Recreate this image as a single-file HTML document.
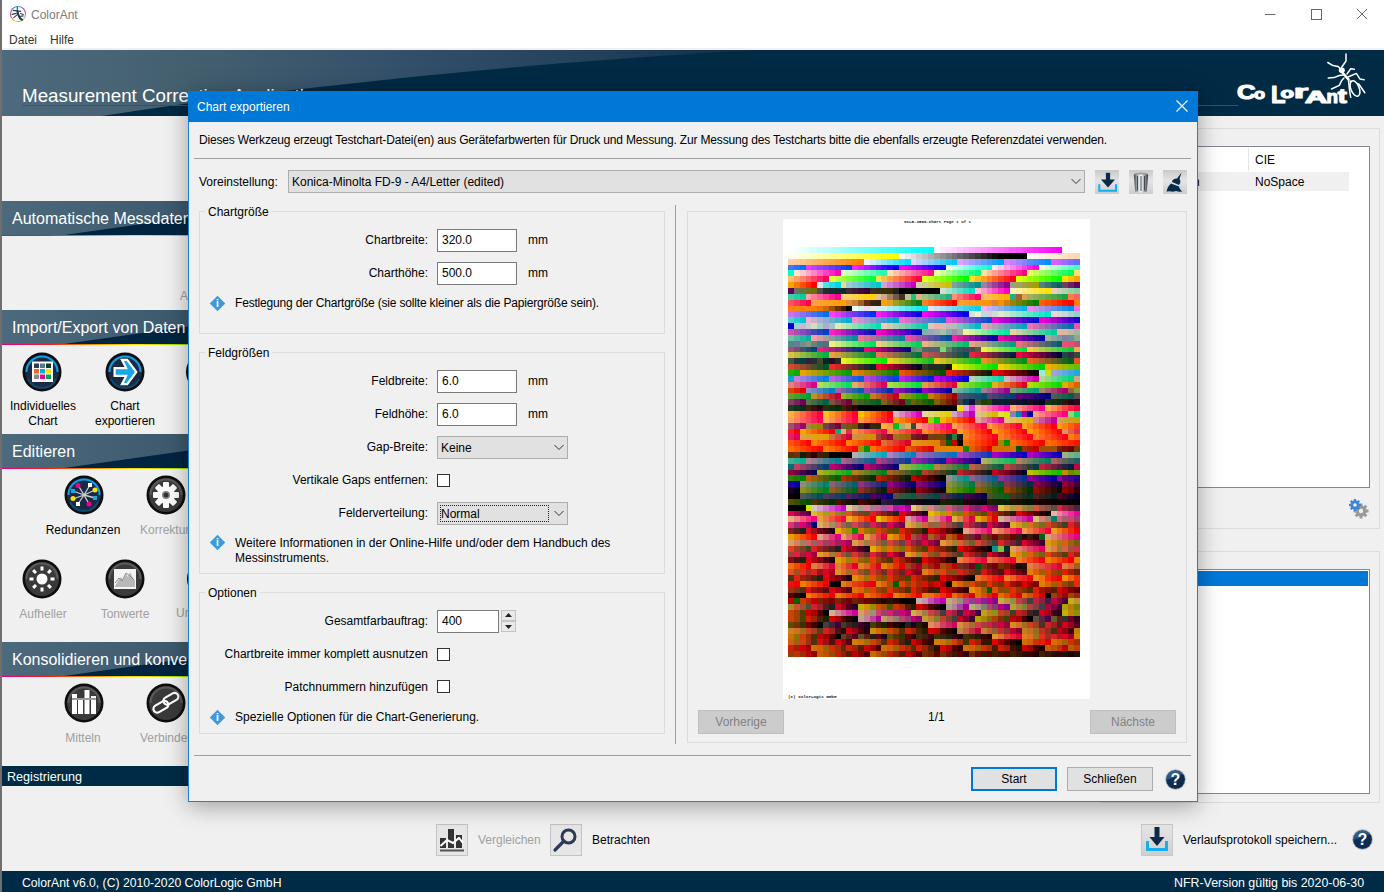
<!DOCTYPE html>
<html><head><meta charset="utf-8">
<style>
*{margin:0;padding:0;box-sizing:border-box}
html,body{width:1384px;height:892px;overflow:hidden;background:#f0f0f0;font-family:"Liberation Sans",sans-serif;font-size:12px;color:#000;position:relative}
.a{position:absolute}
.t{position:absolute;white-space:nowrap;line-height:14px}
.hdr{background:linear-gradient(90deg,#4c687b 0%,#3a566b 60%,#2b475d 100%)}
.sec{position:absolute;left:2px;width:190px;height:35px;overflow:hidden}
.sec .bg{position:absolute;left:0;top:0;width:190px;height:34px;background:linear-gradient(90deg,#4d6a7d,#3c586c)}
.sec .tri{position:absolute;left:0;top:0;width:190px;height:34px;background:#012540;clip-path:polygon(62px 34px,190px 16px,190px 34px)}
.sec .rb{position:absolute;left:0;top:34px;width:190px;height:1px;background:linear-gradient(90deg,#e0007a,#f02020 25%,#ff8000 45%,#ffe000 70%,#80e000 100%)}
.sec .tx{position:absolute;left:10px;top:8px;color:#fff;font-size:16px;line-height:20px;white-space:nowrap}
.ico{position:absolute;width:40px;height:40px;border-radius:50%}
.lbl{position:absolute;white-space:nowrap;text-align:center;line-height:15px;font-size:12px;margin-top:1px}
.gb{position:absolute;border:1px solid #dcdcdc}
.gbt{position:absolute;background:#f0f0f0;padding:0 3px;line-height:14px}
.inp{position:absolute;background:#fff;border:1px solid #7a7a7a;height:23px;width:80px;padding-left:4px;line-height:21px}
.cmb{position:absolute;background:#e1e1e1;border:1px solid #adadad;height:23px;line-height:23px;padding-left:3px}
.chk{position:absolute;width:13px;height:13px;border:1px solid #333;background:#fff}
.rl{position:absolute;white-space:nowrap;text-align:right;line-height:14px}
.btn{position:absolute;background:#e1e1e1;border:1px solid #adadad;text-align:center;line-height:22px;height:24px;width:86px}
.dis{background:#cccccc;border-color:#bfbfbf;color:#838383}
.info{position:absolute;width:15px;height:15px}
.info:before{content:"";position:absolute;left:2px;top:2px;width:11px;height:11px;background:#3d9bd8;transform:rotate(45deg)}
.info:after{content:"i";position:absolute;left:0;top:1px;width:15px;text-align:center;color:#fff;font-weight:bold;font-size:10px;line-height:13px}
.help{position:absolute;width:19px;height:19px;border-radius:50%;background:linear-gradient(160deg,#3a6890 0%,#28507a 38%,#0d2d55 42%,#0b2a50 100%);box-shadow:0 0 1px 0.5px rgba(40,30,20,0.5)}
.help:after{content:"?";position:absolute;left:0;top:0;width:19px;text-align:center;color:#fff;font-weight:bold;font-size:16px;line-height:19px}
</style></head><body>

<!-- left window border -->
<div class="a" style="left:0;top:0;width:2px;height:892px;background:#6f6f6f"></div>
<!-- title bar -->
<div class="a" style="left:2px;top:0;width:1382px;height:48px;background:#fff"></div>
<div class="a" style="left:2px;top:48px;width:1382px;height:2px;background:#f0f0f0"></div>
<div class="t" style="left:31px;top:8px;font-size:12px;color:#7b7b7b">ColorAnt</div>
<div class="a" style="left:10px;top:6px;width:16px;height:16px;border-radius:50%;background:conic-gradient(#40a8e0 0deg,#9048c8 45deg,#e02888 75deg,#f07040 105deg,#b0e040 140deg,#60d040 170deg,#f0e040 200deg,#ff8030 225deg,#e02050 245deg,#e03090 270deg,#8050c0 300deg,#3070d0 330deg,#40a8e0 360deg)"></div>
<div class="a" style="left:11.3px;top:7.3px;width:13.4px;height:13.4px;border-radius:50%;background:#fff"></div>
<svg class="a" style="left:10px;top:6px" width="16" height="16" viewBox="0 0 16 16"><g stroke="#2a3f58" stroke-width="1.1" fill="none" stroke-linecap="round"><path d="M7.3 1V4.5"/><path d="M3.1 4.4L10.7 5.4"/><path d="M2.1 8.4L6.3 7.4"/><path d="M3.8 11.6L7 8.9"/><path d="M10.7 7.4L13.2 8.6"/><path d="M9.5 10.5L13.2 9.9"/></g><path d="M7.5 5.5L8.2 8.5L10 12.3L12 13.8" stroke="#1d3550" stroke-width="2" fill="none" stroke-linecap="round"/></svg>
<svg class="a" style="left:1265px;top:9px" width="12" height="12" viewBox="0 0 12 12"><path d="M0 5.5H10.5" stroke="#666" stroke-width="1"/></svg>
<svg class="a" style="left:1311px;top:9px" width="12" height="12" viewBox="0 0 12 12"><rect x="0.5" y="0.5" width="10" height="10" stroke="#666" stroke-width="1" fill="none"/></svg>
<svg class="a" style="left:1356px;top:8px" width="12" height="12" viewBox="0 0 12 12"><path d="M1 1L11 11M11 1L1 11" stroke="#666" stroke-width="1"/></svg>
<div class="t" style="left:9px;top:33px;color:#333">Datei</div>
<div class="t" style="left:50px;top:33px;color:#333">Hilfe</div>

<!-- header -->
<div class="a" style="left:2px;top:50px;width:1382px;height:66px;overflow:hidden;background:#012a45">
  <div class="a" style="left:0;top:0;width:1382px;height:66px;background:linear-gradient(90deg,#4d6a7e 0,#44606f 180px,#33506a 400px,#22405a 600px,#0f2d46 760px);clip-path:path('M0 0 L755 0 C600 8 330 30 100 66 L0 66 Z')"></div>
</div>
<div class="t" style="left:22px;top:85px;font-size:18.8px;line-height:22px;color:#fff">Measurement Correction Application</div>
<div class="a" style="left:22px;top:105px;width:1216px;height:1px;background:linear-gradient(90deg,#a02080,#f00020 130px,#ff0010 600px,#d0007a 1216px)"></div>


<!-- LEFT SIDEBAR -->
<div class="sec" style="top:201px"><div class="bg"></div><div class="tri"></div><div class="rb"></div><div class="tx">Automatische Messdaten</div></div>
<div class="t" style="left:180px;top:289px;color:#a0a0a0">A</div>
<div class="sec" style="top:310px"><div class="bg"></div><div class="tri"></div><div class="rb"></div><div class="tx">Import/Export von Daten</div></div>
<div class="sec" style="top:434px"><div class="bg"></div><div class="tri"></div><div class="rb"></div><div class="tx">Editieren</div></div>
<div class="sec" style="top:642px"><div class="bg"></div><div class="tri"></div><div class="rb"></div><div class="tx">Konsolidieren und konvertieren</div></div>
<div class="a" style="left:2px;top:766px;width:190px;height:20px;background:#002b46"></div>
<div class="t" style="left:7px;top:770px;color:#fff;font-size:12.6px">Registrierung</div>

<!-- icons row 1 -->
<svg class="a" style="left:22px;top:352px" width="40" height="40" viewBox="0 0 40 40">
 <circle cx="20" cy="20" r="19.5" fill="#0d0d10"/><circle cx="20" cy="20" r="17" fill="#1b2a44"/>
 <path d="M4.5 20A15.5 15.5 0 0 1 35.5 20" stroke="#0aa0e6" stroke-width="2" fill="none"/>
 <path d="M6 27A15.5 15.5 0 0 0 34 27" stroke="#0b4c6e" stroke-width="2" fill="none"/>
 <rect x="10" y="9.5" width="21" height="20.5" fill="#fff"/>
 <rect x="12" y="11.5" width="5" height="4.5" fill="#333a5a"/><rect x="18" y="11.5" width="5" height="4.5" fill="#4f7f86"/><rect x="24" y="11.5" width="5" height="4.5" fill="#123a2a"/>
 <rect x="12" y="17" width="5" height="4.5" fill="#f26522"/><rect x="18" y="17" width="5" height="4.5" fill="#00aee0"/><rect x="24" y="17" width="5" height="4.5" fill="#ffe000"/>
 <rect x="12" y="22.5" width="5" height="4.5" fill="#888"/><rect x="18" y="22.5" width="5" height="4.5" fill="#ec008c"/><rect x="24" y="22.5" width="5" height="4.5" fill="#00a651"/>
</svg>
<div class="lbl" style="left:2px;top:398px;width:82px">Individuelles<br>Chart</div>
<svg class="a" style="left:105px;top:352px" width="40" height="40" viewBox="0 0 40 40">
 <circle cx="20" cy="20" r="19.5" fill="#0d0d10"/><circle cx="20" cy="20" r="17" fill="#1b2a44"/>
 <path d="M4.5 20A15.5 15.5 0 0 1 35.5 20" stroke="#0aa0e6" stroke-width="2" fill="none"/>
 <path d="M6 27A15.5 15.5 0 0 0 34 27" stroke="#0b4c6e" stroke-width="2" fill="none"/>
 <g transform="translate(0.6 0)"><path d="M7.9 15.05H18.9L14.5 6.8H22.2L32.1 20L22.2 33.2H14.5L18.9 24.95H7.9Z" fill="#fff"/>
 <path d="M10.1 17.25H22.2L18.35 9H21.1L29.35 20L21.1 31H18.35L22.2 22.75H10.1Z" fill="#1aa6e8"/></g>
</svg>
<div class="lbl" style="left:84px;top:398px;width:82px">Chart<br>exportieren</div>
<div class="a" style="left:186px;top:352px;width:40px;height:40px;border-radius:50%;background:#1b2a44;border:2px solid #0d0d10"></div>

<!-- icons row 2 -->
<svg class="a" style="left:64px;top:475px" width="40" height="40" viewBox="0 0 40 40">
 <circle cx="20" cy="20" r="19.5" fill="#0d0d10"/><circle cx="20" cy="20" r="17" fill="#1b2a44"/>
 <path d="M4.5 20A15.5 15.5 0 0 1 35.5 20" stroke="#0aa0e6" stroke-width="2" fill="none"/>
 <path d="M6 27A15.5 15.5 0 0 0 34 27" stroke="#0b4c6e" stroke-width="2" fill="none"/>
 <g stroke="#ccc" stroke-width="1.3"><path d="M20 20L14 10M20 20L26 10M20 20L31 15M20 20L31 23M20 20L25 29M20 20L14 29M20 20L9 24M20 20L9 16"/></g>
 <circle cx="14" cy="10.5" r="2.5" fill="#ec008c"/><rect x="24" y="8" width="4" height="4" fill="#fff"/><circle cx="31" cy="15" r="2.5" fill="#ffe000"/><rect x="29" y="21" width="4" height="4" fill="#1aa6e8"/>
 <circle cx="25" cy="29" r="2.5" fill="#ec008c"/><rect x="12" y="27" width="4" height="4" fill="#fff"/><circle cx="9" cy="23.5" r="2.5" fill="#ffe000"/><rect x="7" y="14" width="4" height="4" fill="#1aa6e8"/>
</svg>
<div class="lbl" style="left:33px;top:522px;width:100px">Redundanzen</div>
<svg class="a" style="left:146px;top:475px" width="40" height="40" viewBox="0 0 40 40">
 <circle cx="20" cy="20" r="19.5" fill="#0d0d0d"/><circle cx="20" cy="20" r="17" fill="#3a3a3a"/>
 <path d="M4.5 20A15.5 15.5 0 0 1 35.5 20" stroke="#5a5a5a" stroke-width="2" fill="none"/>
 <g fill="#fafafa"><circle cx="20" cy="20" r="9"/><rect x="17" y="7" width="6" height="26" rx="1"/><rect x="7" y="17" width="26" height="6" rx="1"/><rect x="17" y="7" width="6" height="26" rx="1" transform="rotate(45 20 20)"/><rect x="17" y="7" width="6" height="26" rx="1" transform="rotate(-45 20 20)"/></g>
 <circle cx="20" cy="20" r="4" fill="#888"/><circle cx="20" cy="20" r="2.5" fill="#333"/>
</svg>
<div class="lbl" style="left:140px;top:522px;color:#a0a0a0">Korrektur</div>

<!-- icons row 3 -->
<svg class="a" style="left:22px;top:559px" width="40" height="40" viewBox="0 0 40 40">
 <circle cx="20" cy="20" r="19.5" fill="#0d0d0d"/><circle cx="20" cy="20" r="17" fill="#3a3a3a"/>
 <path d="M4.5 20A15.5 15.5 0 0 1 35.5 20" stroke="#5a5a5a" stroke-width="2" fill="none"/>
 <circle cx="20" cy="20" r="5.5" fill="#fff"/>
 <g fill="#fff"><rect x="18.5" y="7.5" width="3" height="4"/><rect x="18.5" y="28.5" width="3" height="4"/><rect x="7.5" y="18.5" width="4" height="3"/><rect x="28.5" y="18.5" width="4" height="3"/>
 <rect x="18.5" y="7.5" width="3" height="4" transform="rotate(45 20 20)"/><rect x="18.5" y="28.5" width="3" height="4" transform="rotate(45 20 20)"/><rect x="7.5" y="18.5" width="4" height="3" transform="rotate(45 20 20)"/><rect x="28.5" y="18.5" width="4" height="3" transform="rotate(45 20 20)"/></g>
</svg>
<div class="lbl" style="left:2px;top:606px;width:82px;color:#a0a0a0">Aufheller</div>
<svg class="a" style="left:105px;top:559px" width="40" height="40" viewBox="0 0 40 40">
 <circle cx="20" cy="20" r="19.5" fill="#0d0d0d"/><circle cx="20" cy="20" r="17" fill="#3a3a3a"/>
 <path d="M4.5 20A15.5 15.5 0 0 1 35.5 20" stroke="#5a5a5a" stroke-width="2" fill="none"/>
 <rect x="9" y="10" width="22" height="20" fill="#f4f4f4"/>
 <path d="M10 27L13 22L16 18L18 21L21 15L23 18L25 13L27 17L30 22L30 28L10 28Z" fill="#b8b8b8"/>
 <path d="M10 24L14 19L17 22L21 14L25 17L29 21" stroke="#888" fill="none" stroke-width="1"/>
</svg>
<div class="lbl" style="left:84px;top:606px;width:82px;color:#a0a0a0">Tonwerte</div>
<div class="a" style="left:186.5px;top:559px;width:40px;height:40px;border-radius:50%;background:#3a3a3a;border:2px solid #0d0d0d"></div>
<div class="t" style="left:176px;top:606px;color:#a0a0a0">Ur</div>

<!-- icons row 4 -->
<svg class="a" style="left:64px;top:683px" width="40" height="40" viewBox="0 0 40 40">
 <circle cx="20" cy="20" r="19.5" fill="#0d0d0d"/><circle cx="20" cy="20" r="17" fill="#3a3a3a"/>
 <path d="M4.5 20A15.5 15.5 0 0 1 35.5 20" stroke="#5a5a5a" stroke-width="2" fill="none"/>
 <g fill="#fff"><rect x="8" y="11" width="5" height="20"/><rect x="14" y="15" width="5" height="16"/><rect x="20.5" y="7" width="5" height="24"/><rect x="27" y="13" width="5" height="18"/></g>
 <rect x="8" y="15" width="24" height="2" fill="#999"/>
</svg>
<div class="lbl" style="left:33px;top:730px;width:100px;color:#a0a0a0">Mitteln</div>
<svg class="a" style="left:146px;top:683px" width="40" height="40" viewBox="0 0 40 40">
 <circle cx="20" cy="20" r="19.5" fill="#0d0d0d"/><circle cx="20" cy="20" r="17" fill="#3a3a3a"/>
 <path d="M4.5 20A15.5 15.5 0 0 1 35.5 20" stroke="#5a5a5a" stroke-width="2" fill="none"/>
 <g stroke="#fff" stroke-width="2.2" fill="none"><rect x="7" y="20" width="16" height="7.5" rx="3.75" transform="rotate(-30 15 24)"/><rect x="17" y="12" width="16" height="7.5" rx="3.75" transform="rotate(-30 25 16)"/></g>
</svg>
<div class="lbl" style="left:140px;top:730px;color:#a0a0a0">Verbinden</div>

<!-- RIGHT PANEL -->
<div class="gb" style="left:1100px;top:128px;width:280px;height:401px"></div>
<div class="a" style="left:1100px;top:146px;width:270px;height:342px;background:#fff;border:1px solid #828790"></div>
<div class="a" style="left:1101px;top:147px;width:248px;height:25px;background:#fff"></div>
<div class="a" style="left:1248px;top:148px;width:1px;height:23px;background:#e5e5e5"></div>
<div class="a" style="left:1101px;top:172px;width:248px;height:19px;background:#f0f0f0"></div>
<div class="t" style="left:1255px;top:153px">CIE</div>
<div class="t" style="left:1255px;top:175px">NoSpace</div>
<div class="t" style="left:1193px;top:175px">n</div>
<svg class="a" style="left:1346px;top:497px" width="24" height="22" viewBox="0 0 24 22">
 <g fill="#9a9a9a"><circle cx="15" cy="14" r="5.5"/><rect x="13.5" y="6.5" width="3" height="15"/><rect x="7.5" y="12.5" width="15" height="3"/><rect x="13.5" y="6.5" width="3" height="15" transform="rotate(45 15 14)"/><rect x="13.5" y="6.5" width="3" height="15" transform="rotate(-45 15 14)"/></g>
 <circle cx="15" cy="14" r="2.2" fill="#eee"/>
 <g fill="#3b86d8"><circle cx="9" cy="8" r="4.5"/><rect x="7.8" y="2" width="2.4" height="12"/><rect x="3" y="6.8" width="12" height="2.4"/><rect x="7.8" y="2" width="2.4" height="12" transform="rotate(45 9 8)"/><rect x="7.8" y="2" width="2.4" height="12" transform="rotate(-45 9 8)"/></g>
 <circle cx="9" cy="8" r="1.8" fill="#eaf2fb"/>
</svg>
<div class="gb" style="left:1100px;top:551px;width:280px;height:252px"></div>
<div class="a" style="left:1100px;top:569px;width:270px;height:225px;background:#fff;border:1px solid #828790"></div>
<div class="a" style="left:1101px;top:571px;width:267px;height:15px;background:#0078d7"></div>

<!-- BOTTOM TOOLBAR -->
<div class="a" style="left:436px;top:824px;width:32px;height:32px;background:#e6e6e6;border:1px solid #c4c4c4"></div>
<svg class="a" style="left:437px;top:825px" width="30" height="30" viewBox="0 0 30 30">
 <g fill="#333"><rect x="3" y="13" width="6" height="10"/><rect x="11" y="4" width="6" height="19"/><rect x="19" y="10" width="6" height="13"/></g>
 <path d="M3.5 21L10 15L16 18L22 13L26 18" stroke="#fff" stroke-width="2" fill="none"/>
 <rect x="3" y="24.5" width="24" height="2" fill="#555"/>
</svg>
<div class="t" style="left:478px;top:833px;color:#a0a0a0">Vergleichen</div>
<div class="a" style="left:550px;top:824px;width:32px;height:32px;background:#e6e6e6;border:1px solid #c4c4c4"></div>
<svg class="a" style="left:551px;top:825px" width="30" height="30" viewBox="0 0 30 30">
 <circle cx="17.5" cy="11.5" r="6.5" stroke="#2c3a55" stroke-width="3" fill="none"/>
 <path d="M13 16L4 25" stroke="#2c3a55" stroke-width="3.2" stroke-linecap="round"/>
</svg>
<div class="t" style="left:592px;top:833px">Betrachten</div>
<div class="a" style="left:1141px;top:824px;width:32px;height:32px;background:linear-gradient(#e6e6e6,#cfcfcf);border:1px solid #c8c8c8"></div>
<svg class="a" style="left:1142px;top:825px" width="30" height="30" viewBox="0 0 30 30">
 <rect x="4" y="16" width="3" height="10" fill="#15aef0"/><rect x="23" y="16" width="3" height="10" fill="#15aef0"/><rect x="4" y="23" width="22" height="3" fill="#15aef0"/>
 <rect x="12.5" y="2" width="5" height="12" fill="#0b2a48"/><path d="M7.5 12H22.5L15 21Z" fill="#0b2a48"/>
</svg>
<div class="t" style="left:1183px;top:833px">Verlaufsprotokoll speichern...</div>
<div class="help" style="left:1353px;top:830px"></div>


<!-- logo -->
<svg class="a" style="left:1230px;top:50px" width="144" height="62" viewBox="0 0 144 62">
 <g fill="#fff" font-family="Liberation Sans" font-weight="bold" stroke="#fff" stroke-width="1.2" stroke-linejoin="round">
  <text x="7" y="48.6" font-size="21" textLength="18.5" lengthAdjust="spacingAndGlyphs">C</text>
  <text x="24" y="48.6" font-size="15.5" textLength="11" lengthAdjust="spacingAndGlyphs">o</text>
  <text x="41" y="53" font-size="24" textLength="14.5" lengthAdjust="spacingAndGlyphs">L</text>
  <text x="50.5" y="47.6" font-size="15" textLength="13.5" lengthAdjust="spacingAndGlyphs">o</text>
  <text x="64" y="48.3" font-size="17.5" textLength="14" lengthAdjust="spacingAndGlyphs">r</text>
  <text x="75" y="53" font-size="16.5" textLength="22.5" lengthAdjust="spacingAndGlyphs">A</text>
  <text x="96.5" y="53" font-size="19" textLength="11.5" lengthAdjust="spacingAndGlyphs">n</text>
  <text x="107.8" y="53" font-size="19.5" textLength="9" lengthAdjust="spacingAndGlyphs">t</text>
 </g>
 <g stroke="#fff" fill="none" stroke-width="1.5" stroke-linecap="round" stroke-linejoin="round">
  <path d="M116 4V11L111.5 17.5"/>
  <path d="M97.8 12.5L103 15.6L108.2 16.6L110.5 18.7"/>
  <path d="M113 25L109.3 25.5L104 27.6L98.3 28.1"/>
  <path d="M114 28L111.9 30.2L109.3 35.4L101.5 39"/>
  <path d="M117 24L120.7 18.7L124.3 19.3"/>
  <path d="M118 27L126.4 23.4L130 29.1L134.2 29.7"/>
  <path d="M120 31L129 34.3L134.8 42.7"/>
  <path d="M118.5 31L119.7 41.6L120.7 47.3"/>
 </g>
 <ellipse cx="111.8" cy="20.3" rx="3" ry="2.8" fill="#fff"/>
 <path d="M111.5 21.5L118.5 29.5" stroke="#fff" stroke-width="2.6" stroke-linecap="round"/>
 <ellipse cx="125" cy="38.5" rx="4.2" ry="8.2" transform="rotate(-22 125 38.5)" fill="#012a45" stroke="#fff" stroke-width="1.6"/>
</svg>

<!-- status bar -->
<div class="a" style="left:2px;top:871px;width:1382px;height:21px;background:#002b46"></div>
<div class="t" style="left:22px;top:876px;font-size:12.2px;color:#fff">ColorAnt v6.0, (C) 2010-2020 ColorLogic GmbH</div>
<div class="t" style="left:1174px;top:876px;font-size:12.4px;color:#fff">NFR-Version gültig bis 2020-06-30</div>

<!-- DIALOG -->
<div class="a" style="left:188px;top:91px;width:1010px;height:711px;background:#f0f0f0;border:1px solid #1883d7;box-shadow:0 4px 22px rgba(0,0,0,0.35)">
</div>
<div class="a" style="left:188px;top:91px;width:1010px;height:31px;background:#0078d7"></div>
<div class="t" style="left:197px;top:100px;color:#fff">Chart exportieren</div>

<!-- dialog close X -->
<svg class="a" style="left:1176px;top:100px" width="12" height="12" viewBox="0 0 12 12"><path d="M0.5 0.5L11.5 11.5M11.5 0.5L0.5 11.5" stroke="#fff" stroke-width="1.1"/></svg>
<div class="t" style="left:199px;top:133px;letter-spacing:-0.17px">Dieses Werkzeug erzeugt Testchart-Datei(en) aus Gerätefarbwerten für Druck und Messung. Zur Messung des Testcharts bitte die ebenfalls erzeugte Referenzdatei verwenden.</div>
<div class="a" style="left:194px;top:158px;width:997px;height:1px;background:#a0a0a0"></div>
<div class="t" style="left:199px;top:175px">Voreinstellung:</div>
<div class="cmb" style="left:288px;top:170px;width:797px;height:23px;padding-left:3px">Konica-Minolta FD-9 - A4/Letter (edited)</div>
<svg class="a" style="left:1071px;top:178px" width="10" height="7" viewBox="0 0 10 7"><path d="M0.5 1L5 5.5L9.5 1" stroke="#333" fill="none" stroke-width="1"/></svg>


<!-- preset icon buttons -->
<div class="a" style="left:1095px;top:170px;width:24px;height:24px;background:linear-gradient(#c9c9c9,#e4e4e4 45%,#cdcdcd)"></div>
<svg class="a" style="left:1095px;top:170px" width="24" height="24" viewBox="0 0 24 24">
 <path d="M4.3 14.2V20.8H21V14.2" stroke="#0db0f0" stroke-width="2" fill="none"/>
 <rect x="10.9" y="2.8" width="4.2" height="8" fill="#0b2a48"/><path d="M6 9.6H20L13 17.6Z" fill="#0b2a48"/>
</svg>
<div class="a" style="left:1129px;top:170px;width:24px;height:24px;background:linear-gradient(#c9c9c9,#e4e4e4 45%,#cdcdcd)"></div>
<svg class="a" style="left:1129px;top:170px" width="24" height="24" viewBox="0 0 24 24">
 <defs><linearGradient id="tg" x1="0" x2="1"><stop offset="0" stop-color="#3a3f45"/><stop offset="0.3" stop-color="#c8ccd0"/><stop offset="0.5" stop-color="#ffffff"/><stop offset="0.75" stop-color="#9aa0a6"/><stop offset="1" stop-color="#2e3338"/></linearGradient></defs>
 <ellipse cx="12" cy="4.2" rx="7.2" ry="1.8" fill="#9aa0a6"/>
 <path d="M4.8 4.5H19.2L17.8 21.6Q12 23.4 6.2 21.6Z" fill="url(#tg)"/>
 <g stroke="#3a3f45" stroke-width="0.9"><path d="M8.5 6V20.5M12 6V21M15.5 6V20.5"/></g>
</svg>
<div class="a" style="left:1163px;top:170px;width:24px;height:24px;background:linear-gradient(#c9c9c9,#e4e4e4 45%,#cdcdcd)"></div>
<svg class="a" style="left:1163px;top:170px" width="24" height="24" viewBox="0 0 24 24">
 <path d="M18.5 2.5L14 8.5C11 8.5 9 10 9 12L16 15C17.5 13 18 11 16.5 9Z" fill="#0b2a48"/>
 <path d="M8 13.5L16 16.5C16.5 19 18 20.5 19.5 21.5L16 21.8L13 21L10 21.8L6.5 21.2L3.5 21.5C4 19 5.5 15.5 8 13.5Z" fill="#0b2a48"/>
</svg>

<!-- groupbox chartgroesse -->
<div class="gb" style="left:199px;top:211px;width:466px;height:123px"></div>
<div class="gbt" style="left:205px;top:205px">Chartgröße</div>
<div class="rl" style="right:956px;top:233px">Chartbreite:</div>
<div class="inp" style="left:437px;top:229px">320.0</div>
<div class="t" style="left:528px;top:233px">mm</div>
<div class="rl" style="right:956px;top:266px">Charthöhe:</div>
<div class="inp" style="left:437px;top:262px">500.0</div>
<div class="t" style="left:528px;top:266px">mm</div>
<div class="info" style="left:210px;top:296px"></div>
<div class="t" style="left:235px;top:296px;letter-spacing:-0.18px">Festlegung der Chartgröße (sie sollte kleiner als die Papiergröße sein).</div>

<!-- groupbox feldgroessen -->
<div class="gb" style="left:199px;top:352px;width:466px;height:222px"></div>
<div class="gbt" style="left:205px;top:346px">Feldgrößen</div>
<div class="rl" style="right:956px;top:374px">Feldbreite:</div>
<div class="inp" style="left:437px;top:370px">6.0</div>
<div class="t" style="left:528px;top:374px">mm</div>
<div class="rl" style="right:956px;top:407px">Feldhöhe:</div>
<div class="inp" style="left:437px;top:403px">6.0</div>
<div class="t" style="left:528px;top:407px">mm</div>
<div class="rl" style="right:956px;top:440px">Gap-Breite:</div>
<div class="cmb" style="left:437px;top:436px;width:131px">Keine</div>
<svg class="a" style="left:554px;top:444px" width="10" height="7" viewBox="0 0 10 7"><path d="M0.5 1L5 5.5L9.5 1" stroke="#333" fill="none" stroke-width="1"/></svg>
<div class="rl" style="right:956px;top:473px">Vertikale Gaps entfernen:</div>
<div class="chk" style="left:437px;top:474px"></div>
<div class="rl" style="right:956px;top:506px">Felderverteilung:</div>
<div class="cmb" style="left:437px;top:502px;width:131px">Normal</div>
<div class="a" style="left:440px;top:505px;width:109px;height:17px;border:1px dotted #222"></div>
<svg class="a" style="left:554px;top:510px" width="10" height="7" viewBox="0 0 10 7"><path d="M0.5 1L5 5.5L9.5 1" stroke="#333" fill="none" stroke-width="1"/></svg>
<div class="info" style="left:210px;top:535px"></div>
<div class="t" style="left:235px;top:536px;line-height:14.5px">Weitere Informationen in der Online-Hilfe und/oder dem Handbuch des<br>Messinstruments.</div>

<!-- groupbox optionen -->
<div class="gb" style="left:199px;top:592px;width:466px;height:142px"></div>
<div class="gbt" style="left:205px;top:586px">Optionen</div>
<div class="rl" style="right:956px;top:614px">Gesamtfarbauftrag:</div>
<div class="inp" style="left:437px;top:610px;width:62px">400</div>
<div class="a" style="left:501px;top:610px;width:15px;height:11px;background:#e9e9e9;border:1px solid #c4c4c4"></div>
<div class="a" style="left:501px;top:621px;width:15px;height:11px;background:#e9e9e9;border:1px solid #c4c4c4"></div>
<svg class="a" style="left:505px;top:613px" width="7" height="4" viewBox="0 0 7 4"><path d="M0 4L3.5 0L7 4Z" fill="#222"/></svg>
<svg class="a" style="left:505px;top:625px" width="7" height="4" viewBox="0 0 7 4"><path d="M0 0L3.5 4L7 0Z" fill="#222"/></svg>
<div class="rl" style="right:956px;top:647px">Chartbreite immer komplett ausnutzen</div>
<div class="chk" style="left:437px;top:648px"></div>
<div class="rl" style="right:956px;top:680px">Patchnummern hinzufügen</div>
<div class="chk" style="left:437px;top:680px"></div>
<div class="info" style="left:210px;top:710px"></div>
<div class="t" style="left:235px;top:710px">Spezielle Optionen für die Chart-Generierung.</div>

<!-- vertical divider -->
<div class="a" style="left:675px;top:205px;width:1px;height:539px;background:#a0a0a0"></div>

<!-- preview groupbox -->
<div class="gb" style="left:687px;top:211px;width:500px;height:532px"></div>
<div class="a" style="left:783px;top:219px;width:307px;height:480px;background:#fff"></div>
<div id="chart" class="a" style="left:788px;top:247px;width:292px;height:410px;display:grid;grid-template-rows:repeat(70,1fr);filter:blur(0.3px)"><i style="background:linear-gradient(90deg,#ffffff 0% 2%,#f4ffff 2% 4%,#eaffff 4% 6%,#dfffff 6% 8%,#d4ffff 8% 10%,#caffff 10% 12%,#bfffff 12% 14%,#b5ffff 14% 16%,#aaffff 16% 18%,#9fffff 18% 20%,#95ffff 20% 22%,#8affff 22% 24%,#80ffff 24% 26%,#75ffff 26% 28%,#6affff 28% 30%,#60ffff 30% 32%,#55ffff 32% 34%,#4affff 34% 36%,#40ffff 36% 38%,#35ffff 38% 40%,#2affff 40% 42%,#20ffff 42% 44%,#15ffff 44% 46%,#0bffff 46% 48%,#00ffff 48% 50%,#fff8ff 50% 52%,#ffecff 52% 54%,#ffe0ff 54% 56%,#ffd5ff 56% 58%,#ffc9ff 58% 60%,#ffbdff 60% 62%,#ffb1ff 62% 64%,#ffa5ff 64% 66%,#ff9aff 66% 68%,#ff8eff 68% 70%,#ff82ff 70% 72%,#ff76ff 72% 74%,#ff6aff 74% 76%,#ff5eff 76% 78%,#ff53ff 78% 80%,#ff47ff 80% 82%,#ff3bff 82% 84%,#ff2fff 84% 86%,#ff23ff 86% 88%,#ff18ff 88% 90%,#ff0cff 90% 92%,#ff00ff 92% 94%,#ffffff 94% 96%,#ffffff 96% 98%,#ffffff 98% 100%)"></i><i style="background:linear-gradient(90deg,#fffff0 0% 2%,#ffffe3 2% 4%,#ffffd5 4% 6%,#ffffc8 6% 8%,#ffffbb 8% 10%,#ffffad 10% 12%,#ffffa0 12% 14%,#ffff93 14% 16%,#ffff85 16% 18%,#ffff78 18% 20%,#ffff6b 20% 22%,#ffff5d 22% 24%,#ffff50 24% 26%,#ffff43 26% 28%,#ffff35 28% 30%,#ffff28 30% 32%,#ffff1b 32% 34%,#ffff0d 34% 36%,#ffff00 36% 38%,#f8f8f8 38% 40%,#e9e9e9 40% 42%,#dbdbdb 42% 44%,#cccccc 44% 46%,#bebebe 46% 48%,#afafaf 48% 50%,#a0a0a0 50% 52%,#929292 52% 54%,#838383 54% 56%,#757575 56% 58%,#666666 58% 60%,#585858 60% 62%,#494949 62% 64%,#3a3a3a 64% 66%,#2c2c2c 66% 68%,#1d1d1d 68% 70%,#0f0f0f 70% 72%,#000000 72% 74%,#000000 74% 76%,#000000 76% 78%,#000000 78% 80%,#000000 80% 82%,#fffaf5 82% 84%,#fff6ec 84% 86%,#fff2e4 86% 88%,#ffeddb 88% 90%,#ffe9d2 90% 92%,#ffe5ca 92% 94%,#ffe0c1 94% 96%,#ffdcb9 96% 98%,#ffd8b0 98% 100%)"></i><i style="background:linear-gradient(90deg,#ffd0a8 0% 2%,#ffc99a 2% 4%,#ffc38c 4% 6%,#ffbc7e 6% 8%,#ffb570 8% 10%,#ffaf62 10% 12%,#ffa854 12% 14%,#ffa146 14% 16%,#ff9b38 16% 18%,#ff942a 18% 20%,#ff8d1c 20% 22%,#ff870e 22% 24%,#ff8000 24% 26%,#f0f0ff 26% 28%,#ceeeff 28% 30%,#abebff 30% 32%,#89e9ff 32% 34%,#67e7ff 34% 36%,#45e5ff 36% 38%,#22e2ff 38% 40%,#00e0ff 40% 42%,#e8d0ff 42% 44%,#c7cfff 44% 46%,#a6ceff 46% 48%,#85cdff 48% 50%,#63cbff 50% 52%,#42caff 52% 54%,#21c9ff 54% 56%,#00c8ff 56% 58%,#e0a0ff 58% 60%,#c0a0ff 60% 62%,#a0a0ff 62% 64%,#80a0ff 64% 66%,#60a0ff 66% 68%,#40a0ff 68% 70%,#20a0ff 70% 72%,#00a0ff 72% 74%,#e080ff 74% 76%,#c082ff 76% 78%,#a085ff 78% 80%,#8087ff 80% 82%,#6089ff 82% 84%,#408bff 84% 86%,#208eff 86% 88%,#0090ff 88% 90%,#e060ff 90% 92%,#c064ff 92% 94%,#a068ff 94% 96%,#806cff 96% 98%,#6070ff 98% 100%)"></i><i style="background:linear-gradient(90deg,#5070ff 0% 2%,#2870ff 2% 4%,#0070ff 4% 6%,#e040ff 6% 8%,#c040ff 8% 10%,#a040ff 10% 12%,#8040ff 12% 14%,#6040ff 14% 16%,#4040ff 16% 18%,#2040ff 18% 20%,#0040ff 20% 22%,#ff20ff 22% 24%,#db1bff 24% 26%,#b617ff 26% 28%,#9212ff 28% 30%,#6d0eff 30% 32%,#4909ff 32% 34%,#2405ff 34% 36%,#0000ff 36% 38%,#ff00ff 38% 40%,#db00ff 40% 42%,#b600ff 42% 44%,#9200ff 44% 46%,#6d00ff 46% 48%,#4900ff 48% 50%,#2400ff 50% 52%,#0000ff 52% 54%,#f0fff0 54% 56%,#ceffee 56% 58%,#abffeb 58% 60%,#89ffe9 60% 62%,#67ffe7 62% 64%,#45ffe5 64% 66%,#22ffe2 66% 68%,#00ffe0 68% 70%,#ffe8f0 70% 72%,#ffc7ee 72% 74%,#ffa6eb 74% 76%,#ff85e9 76% 78%,#ff63e7 78% 80%,#ff42e5 80% 82%,#ff21e2 82% 84%,#ff00e0 84% 86%,#f0ffe0 86% 88%,#d3ffdb 88% 90%,#b5ffd5 90% 92%,#98ffd0 92% 94%,#7bffcb 94% 96%,#5dffc5 96% 98%,#40ffc0 98% 100%)"></i><i style="background:linear-gradient(90deg,#00ffd0 0% 2%,#ffe8d0 2% 4%,#ffc7ce 4% 6%,#ffa6cb 6% 8%,#ff85c9 8% 10%,#ff63c7 10% 12%,#ff42c5 12% 14%,#ff21c2 14% 16%,#ff00c0 16% 18%,#e8ffc0 18% 20%,#cbffbe 20% 22%,#afffbb 22% 24%,#92ffb9 24% 26%,#76ffb7 26% 28%,#59ffb5 28% 30%,#3dffb2 30% 32%,#20ffb0 32% 34%,#ffe0b0 34% 36%,#ffc2ab 36% 38%,#ffa5a7 38% 40%,#ff87a2 40% 42%,#ff699e 42% 44%,#ff4b99 44% 46%,#ff2e95 46% 48%,#ff1090 48% 50%,#f0ffa0 50% 52%,#ceff9b 52% 54%,#abff97 54% 56%,#89ff92 56% 58%,#67ff8e 58% 60%,#45ff89 60% 62%,#22ff85 62% 64%,#00ff80 64% 66%,#ffe0a0 66% 68%,#ffc09b 68% 70%,#ffa097 70% 72%,#ff8092 72% 74%,#ff608e 74% 76%,#ff4089 76% 78%,#ff2085 78% 80%,#ff0080 80% 82%,#e8ff60 82% 84%,#c7ff60 84% 86%,#a6ff60 86% 88%,#85ff60 88% 90%,#63ff60 90% 92%,#42ff60 92% 94%,#21ff60 94% 96%,#00ff60 96% 98%,#ffe070 98% 100%)"></i><i style="background:linear-gradient(90deg,#ffc070 0% 2%,#ffa06d 2% 4%,#ff806b 4% 6%,#ff6068 6% 8%,#ff4065 8% 10%,#ff2063 10% 12%,#ff0060 12% 14%,#e0ff40 14% 16%,#c0ff40 16% 18%,#a0ff40 18% 20%,#80ff40 20% 22%,#60ff40 22% 24%,#40ff40 24% 26%,#20ff40 26% 28%,#00ff40 28% 30%,#ffe050 30% 32%,#ffc04e 32% 34%,#ffa04b 34% 36%,#ff8049 36% 38%,#ff6047 38% 40%,#ff4045 40% 42%,#ff2042 42% 44%,#ff0040 44% 46%,#e0ff20 46% 48%,#c0ff1b 48% 50%,#a0ff17 50% 52%,#80ff12 52% 54%,#60ff0e 54% 56%,#40ff09 56% 58%,#20ff05 58% 60%,#00ff00 60% 62%,#ffe020 62% 64%,#ffc020 64% 66%,#ffa020 66% 68%,#ff8020 68% 70%,#ff6020 70% 72%,#ff4020 72% 74%,#ff2020 74% 76%,#ff0020 76% 78%,#e0ff00 78% 80%,#c0ff00 80% 82%,#a0ff00 82% 84%,#80ff00 84% 86%,#60ff00 86% 88%,#40ff00 88% 90%,#20ff00 90% 92%,#00ff00 92% 94%,#ffe000 94% 96%,#ffc000 96% 98%,#ffa000 98% 100%)"></i><i style="background:linear-gradient(90deg,#ffa000 0% 2%,#ff7800 2% 4%,#ff5000 4% 6%,#ff2800 6% 8%,#ff0000 8% 10%,#d0e8f0 10% 12%,#50e0e0 12% 14%,#28dce4 14% 16%,#00d8e8 16% 18%,#e0e090 18% 20%,#a0c8d0 20% 22%,#80c8d0 22% 24%,#60c8d0 24% 26%,#40c8d0 26% 28%,#20c8d0 28% 30%,#00c8d0 30% 32%,#d0a0d8 32% 34%,#cd80d3 34% 36%,#ca60ce 36% 38%,#c640ca 38% 40%,#c320c5 40% 42%,#c000c0 42% 44%,#d0d0a0 44% 46%,#d0cd80 46% 48%,#d0ca60 48% 50%,#d0c640 50% 52%,#d0c320 52% 54%,#d0c000 54% 56%,#80a0a0 56% 58%,#609c9c 58% 60%,#409898 60% 62%,#209494 62% 64%,#009090 64% 66%,#a080a0 66% 68%,#9c609c 68% 70%,#984098 70% 72%,#942094 72% 74%,#900090 74% 76%,#a0a080 76% 78%,#a0a060 78% 80%,#a0a040 80% 82%,#a0a020 82% 84%,#a0a000 84% 86%,#508080 86% 88%,#357575 88% 90%,#1b6b6b 90% 92%,#006060 92% 94%,#704060 94% 96%,#682060 96% 98%,#600060 98% 100%)"></i><i style="background:linear-gradient(90deg,#600060 0% 2%,#707060 2% 4%,#707040 4% 6%,#707020 6% 8%,#707000 8% 10%,#504850 10% 12%,#203030 12% 14%,#153030 14% 16%,#0b3030 16% 18%,#003030 18% 20%,#402838 20% 22%,#3d1b38 22% 24%,#3b0d38 24% 26%,#380038 26% 28%,#383020 28% 30%,#383015 30% 32%,#38300b 32% 34%,#383000 34% 36%,#202020 36% 38%,#000000 38% 40%,#000000 40% 42%,#000000 42% 44%,#000000 44% 46%,#000000 46% 48%,#000000 48% 50%,#000000 50% 52%,#d0e0d0 52% 54%,#a6e0cd 54% 56%,#7de0ca 56% 58%,#53e0c6 58% 60%,#2ae0c3 60% 62%,#00e0c0 62% 64%,#ffc0d0 64% 66%,#ff9acd 66% 68%,#ff73ca 68% 70%,#ff4dc6 70% 72%,#ff26c3 72% 74%,#ff00c0 74% 76%,#fff0c0 76% 78%,#ffeda0 78% 80%,#ffeb80 80% 82%,#ffe860 82% 84%,#ffe540 84% 86%,#ffe320 86% 88%,#ffe000 88% 90%,#e8d0c0 90% 92%,#ced0b8 92% 94%,#b4d0b0 94% 96%,#9ad0a8 96% 98%,#80d0a0 98% 100%)"></i><i style="background:linear-gradient(90deg,#40d0a0 0% 2%,#20d0a0 2% 4%,#00d0a0 4% 6%,#ffa0a0 6% 8%,#ff809d 8% 10%,#ff609a 10% 12%,#ff4096 12% 14%,#ff2093 14% 16%,#ff0090 16% 18%,#ffd080 18% 20%,#ffd066 20% 22%,#ffd04d 22% 24%,#ffd033 24% 26%,#ffd01a 26% 28%,#ffd000 28% 30%,#e8c098 30% 32%,#d0a888 32% 34%,#a08060 34% 36%,#705848 36% 38%,#403020 38% 40%,#c0c090 40% 42%,#20c080 42% 44%,#e0b080 44% 46%,#a0c080 46% 48%,#80bc80 48% 50%,#60b880 50% 52%,#40b480 52% 54%,#20b080 54% 56%,#ff9070 56% 58%,#ff6c70 58% 60%,#ff4870 60% 62%,#ff2470 62% 64%,#ff0070 64% 66%,#ffc060 66% 68%,#ffbc48 68% 70%,#ffb830 70% 72%,#ffb418 72% 74%,#ffb000 74% 76%,#20b080 76% 78%,#a06040 78% 80%,#e0a050 80% 82%,#a0b060 82% 84%,#8bad5b 84% 86%,#75ab55 86% 88%,#60a850 88% 90%,#4ba54b 90% 92%,#35a345 92% 94%,#20a040 94% 96%,#ff8040 96% 98%,#ff6060 98% 100%)"></i><i style="background:linear-gradient(90deg,#ff5060 0% 2%,#ff355b 2% 4%,#ff1b55 4% 6%,#ff0050 6% 8%,#ffa040 8% 10%,#ffa033 10% 12%,#ffa026 12% 14%,#ffa01a 14% 16%,#ffa00d 16% 18%,#ffa000 18% 20%,#e09040 20% 22%,#d08030 22% 24%,#a06020 24% 26%,#603010 26% 28%,#402008 28% 30%,#302010 30% 32%,#ffa000 32% 34%,#e0a020 34% 36%,#a0a020 36% 38%,#789820 38% 40%,#509020 40% 42%,#288820 42% 44%,#008020 44% 46%,#ff8020 46% 48%,#ff661a 48% 50%,#ff4d13 50% 52%,#ff330d 52% 54%,#ff1a06 54% 56%,#ff0000 56% 58%,#ffa030 58% 60%,#ff9d26 60% 62%,#ff9a1d 62% 64%,#ff9613 64% 66%,#ff930a 66% 68%,#ff9000 68% 70%,#e08030 70% 72%,#ff9000 72% 74%,#d08010 74% 76%,#a08000 76% 78%,#788000 78% 80%,#508000 80% 82%,#288000 82% 84%,#008000 84% 86%,#ff6000 86% 88%,#ff4d00 88% 90%,#ff3a00 90% 92%,#ff2600 92% 94%,#ff1300 94% 96%,#ff0000 96% 98%,#ff8000 98% 100%)"></i><i style="background:linear-gradient(90deg,#ff8010 0% 2%,#ff800c 2% 4%,#ff8008 4% 6%,#ff8004 6% 8%,#ff8000 8% 10%,#e87800 10% 12%,#d06800 12% 14%,#a05000 14% 16%,#703000 16% 18%,#402000 18% 20%,#000000 20% 22%,#f0f8f8 22% 24%,#d8f0f0 24% 26%,#f0d8f0 26% 28%,#e8e8e8 28% 30%,#e0e8e8 30% 32%,#c8f0f0 32% 34%,#abefef 34% 36%,#8feeee 36% 38%,#72eded 38% 40%,#56ebeb 40% 42%,#39eaea 42% 44%,#1de9e9 44% 46%,#00e8e8 46% 48%,#e8e0f0 48% 50%,#cbdeef 50% 52%,#aedcee 52% 54%,#91daed 54% 56%,#74d8ec 56% 58%,#57d6eb 58% 60%,#3ad4ea 60% 62%,#1dd2e9 62% 64%,#00d0e8 64% 66%,#f0b0e8 66% 68%,#ceb0e8 68% 70%,#abb0e8 70% 72%,#89b0e8 72% 74%,#67b0e8 74% 76%,#45b0e8 76% 78%,#22b0e8 78% 80%,#00b0e8 80% 82%,#f090e8 82% 84%,#ce90e8 84% 86%,#ab90e8 86% 88%,#8990e8 88% 90%,#6790e8 90% 92%,#4590e8 92% 94%,#2290e8 94% 96%,#0090e8 96% 98%,#f070e8 98% 100%)"></i><i style="background:linear-gradient(90deg,#d070f0 0% 2%,#ad70f0 2% 4%,#8b70f0 4% 6%,#6870f0 6% 8%,#4570f0 8% 10%,#2370f0 10% 12%,#0070f0 12% 14%,#ff40f0 14% 16%,#db3ef0 16% 18%,#b63bf0 18% 20%,#9239f0 20% 22%,#6d37f0 22% 24%,#4935f0 24% 26%,#2432f0 26% 28%,#0030f0 28% 30%,#ff20f0 30% 32%,#db1bee 32% 34%,#b617eb 34% 36%,#9212e9 36% 38%,#6d0ee7 38% 40%,#4909e5 40% 42%,#2405e2 42% 44%,#0000e0 44% 46%,#ff00f0 46% 48%,#db00ef 48% 50%,#b600ee 50% 52%,#9200ed 52% 54%,#6d00eb 54% 56%,#4900ea 56% 58%,#2400e9 58% 60%,#0000e8 60% 62%,#d8e0e0 62% 64%,#f0f0d0 64% 66%,#b0e0e0 66% 68%,#d8c8e0 68% 70%,#c8e0d8 70% 72%,#e8e8c8 72% 74%,#cbe8c9 74% 76%,#aee8ca 76% 78%,#91e8cb 78% 80%,#74e8cc 80% 82%,#57e8cd 82% 84%,#3ae8ce 84% 86%,#1de8cf 86% 88%,#00e8d0 88% 90%,#e8d8d0 90% 92%,#d8d8d0 92% 94%,#c8d8d0 94% 96%,#b0d0d0 96% 98%,#90d0d0 98% 100%)"></i><i style="background:linear-gradient(90deg,#50d0d0 0% 2%,#28ccd0 2% 4%,#00c8d0 4% 6%,#f0b0d0 6% 8%,#ceb0d0 8% 10%,#abb0d0 10% 12%,#89b0d0 12% 14%,#67b0d0 14% 16%,#45b0d0 16% 18%,#22b0d0 18% 20%,#00b0d0 20% 22%,#f090d0 22% 24%,#ce92d0 24% 26%,#ab95d0 26% 28%,#8997d0 28% 30%,#6799d0 30% 32%,#459bd0 32% 34%,#229ed0 34% 36%,#00a0d0 36% 38%,#f070d0 38% 40%,#d072d0 40% 42%,#b075d0 42% 44%,#9077d0 44% 46%,#7079d0 46% 48%,#507bd0 48% 50%,#307ed0 50% 52%,#1080d0 52% 54%,#f050d0 54% 56%,#ce50d0 56% 58%,#ab50d0 58% 60%,#8950d0 60% 62%,#6750d0 62% 64%,#4550d0 64% 66%,#2250d0 66% 68%,#0050d0 68% 70%,#f000d0 70% 72%,#ce02d0 72% 74%,#ab05d0 74% 76%,#8907d0 76% 78%,#6709d0 78% 80%,#450bd0 80% 82%,#220ed0 82% 84%,#0010d0 84% 86%,#f000d0 86% 88%,#cd00d0 88% 90%,#ab00d0 90% 92%,#8800d0 92% 94%,#6500d0 94% 96%,#4300d0 96% 98%,#2000d0 98% 100%)"></i><i style="background:linear-gradient(90deg,#0000d0 0% 2%,#a0d0d0 2% 4%,#c8b8d8 4% 6%,#c0d0d0 6% 8%,#d0e0c0 8% 10%,#a0d0d0 10% 12%,#b0a8d0 12% 14%,#a0c8c8 14% 16%,#e8e8b0 16% 18%,#c7e7b0 18% 20%,#a6e6b0 20% 22%,#85e5b0 22% 24%,#63e3b0 24% 26%,#42e2b0 26% 28%,#21e1b0 28% 30%,#00e0b0 30% 32%,#e8d0b0 32% 34%,#c7d0b0 34% 36%,#a6d0b0 36% 38%,#85d0b0 38% 40%,#63d0b0 40% 42%,#42d0b0 42% 44%,#21d0b0 44% 46%,#00d0b0 46% 48%,#d0d0b8 48% 50%,#f0b0b0 50% 52%,#e0b8b0 52% 54%,#c0b8b8 54% 56%,#b0c0b0 56% 58%,#80c0c0 58% 60%,#55bdc0 60% 62%,#2bbbc0 62% 64%,#00b8c0 64% 66%,#f0a0b0 66% 68%,#cea0b2 68% 70%,#aba0b5 70% 72%,#89a0b7 72% 74%,#67a0b9 74% 76%,#45a0bb 76% 78%,#22a0be 78% 80%,#00a0c0 80% 82%,#f070b0 82% 84%,#ce70b0 84% 86%,#ab70b0 86% 88%,#8970b0 88% 90%,#6770b0 90% 92%,#4570b0 92% 94%,#2270b0 94% 96%,#0070b0 96% 98%,#f050b0 98% 100%)"></i><i style="background:linear-gradient(90deg,#d050b0 0% 2%,#ad4db3 2% 4%,#8b4bb5 4% 6%,#6848b8 6% 8%,#4545bb 8% 10%,#2343bd 10% 12%,#0040c0 12% 14%,#ff20c0 14% 16%,#db1ec0 16% 18%,#b61bc0 18% 20%,#9219c0 20% 22%,#6d17c0 22% 24%,#4915c0 24% 26%,#2412c0 26% 28%,#0010c0 28% 30%,#ff00c0 30% 32%,#db00c0 32% 34%,#b600c0 34% 36%,#9200c0 36% 38%,#6d00c0 38% 40%,#4900c0 40% 42%,#2400c0 42% 44%,#0000c0 44% 46%,#80b0b0 46% 48%,#a0a0c0 48% 50%,#a0b0b8 50% 52%,#a8c0a8 52% 54%,#80b0b0 54% 56%,#a090b0 56% 58%,#a0a8a0 58% 60%,#f0f0a0 60% 62%,#ceefa0 62% 64%,#abeea0 64% 66%,#89eda0 66% 68%,#67eba0 68% 70%,#45eaa0 70% 72%,#22e9a0 72% 74%,#00e8a0 74% 76%,#f0d0a0 76% 78%,#ced0a0 78% 80%,#abd0a0 80% 82%,#89d0a0 82% 84%,#67d0a0 84% 86%,#45d0a0 86% 88%,#22d0a0 88% 90%,#00d0a0 90% 92%,#f0b0a0 92% 94%,#d8b8a0 94% 96%,#c0b8a0 96% 98%,#a0b8a0 98% 100%)"></i><i style="background:linear-gradient(90deg,#70c0a0 0% 2%,#4bbba0 2% 4%,#25b5a0 4% 6%,#00b0a0 6% 8%,#f0a0a0 8% 10%,#ce9ea0 10% 12%,#ab9ba0 12% 14%,#8999a0 14% 16%,#6797a0 16% 18%,#4595a0 18% 20%,#2292a0 20% 22%,#0090a0 22% 24%,#f07090 24% 26%,#ce7292 26% 28%,#ab7595 28% 30%,#897797 30% 32%,#677999 32% 34%,#457b9b 34% 36%,#227e9e 36% 38%,#0080a0 38% 40%,#f050a0 40% 42%,#ce50a0 42% 44%,#ab50a0 44% 46%,#8950a0 46% 48%,#6750a0 48% 50%,#4550a0 50% 52%,#2250a0 52% 54%,#0050a0 54% 56%,#f020a0 56% 58%,#ce1ba0 58% 60%,#ab17a0 60% 62%,#8912a0 62% 64%,#670ea0 64% 66%,#4509a0 66% 68%,#2205a0 68% 70%,#0000a0 70% 72%,#f000a0 72% 74%,#ce00a0 74% 76%,#ab00a0 76% 78%,#8900a0 78% 80%,#6700a0 80% 82%,#4500a0 82% 84%,#2200a0 84% 86%,#0000a0 86% 88%,#a0b098 88% 90%,#90a0a0 90% 92%,#70a0a0 92% 94%,#8080a0 94% 96%,#7090a0 96% 98%,#90a890 98% 100%)"></i><i style="background:linear-gradient(90deg,#508890 0% 2%,#707898 2% 4%,#709090 4% 6%,#889878 6% 8%,#708080 8% 10%,#408080 10% 12%,#606880 12% 14%,#f0f080 14% 16%,#ceee7b 16% 18%,#abeb77 18% 20%,#89e972 20% 22%,#67e76e 22% 24%,#45e569 24% 26%,#22e265 26% 28%,#00e060 28% 30%,#f0d080 30% 32%,#ced07b 32% 34%,#abd077 34% 36%,#89d072 36% 38%,#67d06e 38% 40%,#45d069 40% 42%,#22d065 42% 44%,#00d060 44% 46%,#f0b080 46% 48%,#ceb27e 48% 50%,#abb57b 50% 52%,#89b779 52% 54%,#67b977 54% 56%,#45bb75 56% 58%,#22be72 58% 60%,#00c070 60% 62%,#f0a080 62% 64%,#cea080 64% 66%,#aba080 66% 68%,#89a080 68% 70%,#67a080 70% 72%,#45a080 72% 74%,#22a080 74% 76%,#00a080 76% 78%,#f07070 78% 80%,#ce6e70 80% 82%,#ab6b70 82% 84%,#896970 84% 86%,#676770 86% 88%,#456570 88% 90%,#226270 90% 92%,#006070 92% 94%,#f05070 94% 96%,#e05070 96% 98%,#c05070 98% 100%)"></i><i style="background:linear-gradient(90deg,#a05070 0% 2%,#784e72 2% 4%,#504c74 4% 6%,#284a76 6% 8%,#004878 8% 10%,#f02080 10% 12%,#ce2280 12% 14%,#ab2580 14% 16%,#892780 16% 18%,#672980 18% 20%,#452b80 20% 22%,#222e80 22% 24%,#003080 24% 26%,#ff0070 26% 28%,#db0072 28% 30%,#b60075 30% 32%,#920077 32% 34%,#6d0079 34% 36%,#49007b 36% 38%,#24007e 38% 40%,#000080 40% 42%,#708080 42% 44%,#808870 44% 46%,#407070 46% 48%,#506070 48% 50%,#506070 50% 52%,#70e070 52% 54%,#608060 54% 56%,#406060 56% 58%,#305858 58% 60%,#504060 60% 62%,#405050 62% 64%,#506040 64% 66%,#f0f040 66% 68%,#ceee40 68% 70%,#abeb40 70% 72%,#89e940 72% 74%,#67e740 74% 76%,#45e540 76% 78%,#22e240 78% 80%,#00e040 80% 82%,#f0d040 82% 84%,#ced040 84% 86%,#abd040 86% 88%,#89d040 88% 90%,#67d040 90% 92%,#45d040 92% 94%,#22d040 94% 96%,#00d040 96% 98%,#f0b040 98% 100%)"></i><i style="background:linear-gradient(90deg,#e0c040 0% 2%,#bbbd40 2% 4%,#95bb40 4% 6%,#70b840 6% 8%,#4bb540 8% 10%,#25b340 10% 12%,#00b040 12% 14%,#f0a040 14% 16%,#ce9e40 16% 18%,#ab9b40 18% 20%,#899940 20% 22%,#679740 22% 24%,#459540 24% 26%,#229240 26% 28%,#009040 28% 30%,#f07050 30% 32%,#ce704e 32% 34%,#ab704b 34% 36%,#897049 36% 38%,#677047 38% 40%,#457045 40% 42%,#227042 42% 44%,#007040 44% 46%,#d05050 46% 48%,#b25050 48% 50%,#955050 50% 52%,#775050 52% 54%,#595050 54% 56%,#3b5050 56% 58%,#1e5050 58% 60%,#005050 60% 62%,#f02040 62% 64%,#ce2040 64% 66%,#ab2040 66% 68%,#892040 68% 70%,#672040 70% 72%,#452040 72% 74%,#222040 74% 76%,#002040 76% 78%,#f00040 78% 80%,#ce0040 80% 82%,#ab0040 82% 84%,#890040 84% 86%,#670040 86% 88%,#450040 88% 90%,#220040 90% 92%,#000040 92% 94%,#204848 94% 96%,#402840 96% 98%,#304848 98% 100%)"></i><i style="background:linear-gradient(90deg,#405840 0% 2%,#203838 2% 4%,#004040 4% 6%,#302040 6% 8%,#203030 8% 10%,#404828 10% 12%,#002828 12% 14%,#201020 14% 16%,#203020 16% 18%,#f0f020 18% 20%,#cef01b 20% 22%,#abf017 22% 24%,#89f012 24% 26%,#67f00e 26% 28%,#45f009 28% 30%,#22f005 30% 32%,#00f000 32% 34%,#f0d020 34% 36%,#d0ce20 36% 38%,#b0cb20 38% 40%,#90c920 40% 42%,#70c720 42% 44%,#50c520 44% 46%,#30c220 46% 48%,#10c020 48% 50%,#f0c020 50% 52%,#cec020 52% 54%,#abc020 54% 56%,#89c020 56% 58%,#67c020 58% 60%,#45c020 60% 62%,#22c020 62% 64%,#00c020 64% 66%,#f09020 66% 68%,#ce9020 68% 70%,#ab9020 70% 72%,#899020 72% 74%,#679020 74% 76%,#459020 76% 78%,#229020 78% 80%,#009020 80% 82%,#f06020 82% 84%,#ce6020 84% 86%,#ab6020 86% 88%,#896020 88% 90%,#676020 90% 92%,#456020 92% 94%,#226020 94% 96%,#006020 96% 98%,#f05020 98% 100%)"></i><i style="background:linear-gradient(90deg,#d84830 0% 2%,#b4492f 2% 4%,#904b2d 4% 6%,#6c4c2c 6% 8%,#484d2b 8% 10%,#244f29 10% 12%,#005028 12% 14%,#f02828 14% 16%,#ce2828 16% 18%,#ab2828 18% 20%,#892828 20% 22%,#672828 22% 24%,#452828 24% 26%,#222828 26% 28%,#002828 28% 30%,#f00030 30% 32%,#ce002e 32% 34%,#ab002b 34% 36%,#890029 36% 38%,#670027 38% 40%,#450025 40% 42%,#220022 42% 44%,#000020 44% 46%,#303820 46% 48%,#202828 48% 50%,#202828 50% 52%,#202818 52% 54%,#101010 54% 56%,#f0f000 56% 58%,#ceee00 58% 60%,#abeb00 60% 62%,#89e900 62% 64%,#67e700 64% 66%,#45e500 66% 68%,#22e200 68% 70%,#00e000 70% 72%,#f0d000 72% 74%,#ced000 74% 76%,#abd000 76% 78%,#89d000 78% 80%,#67d000 80% 82%,#45d000 82% 84%,#22d000 84% 86%,#00d000 86% 88%,#f0b000 88% 90%,#d3b300 90% 92%,#b6b600 92% 94%,#9aba00 94% 96%,#7dbd00 96% 98%,#60c000 98% 100%)"></i><i style="background:linear-gradient(90deg,#20b000 0% 2%,#00b000 2% 4%,#f0a000 4% 6%,#d2a000 6% 8%,#b4a000 8% 10%,#96a000 10% 12%,#78a000 12% 14%,#5aa000 14% 16%,#3ca000 16% 18%,#1ea000 18% 20%,#00a000 20% 22%,#f08000 22% 24%,#ce8000 24% 26%,#ab8000 26% 28%,#898000 28% 30%,#678000 30% 32%,#458000 32% 34%,#228000 34% 36%,#008000 36% 38%,#f05000 38% 40%,#ce5000 40% 42%,#ab5000 42% 44%,#895000 44% 46%,#675000 46% 48%,#455000 48% 50%,#225000 50% 52%,#005000 52% 54%,#f02000 54% 56%,#ce2000 56% 58%,#ab2000 58% 60%,#892000 60% 62%,#672000 62% 64%,#452000 64% 66%,#222000 66% 68%,#002000 68% 70%,#f00000 70% 72%,#ce0000 72% 74%,#ab0000 74% 76%,#890000 76% 78%,#670000 78% 80%,#450000 80% 82%,#220000 82% 84%,#000000 84% 86%,#a0e8e0 86% 88%,#d0e000 88% 90%,#a0a0e0 90% 92%,#80a8e0 92% 94%,#60a8e0 94% 96%,#40a8e0 96% 98%,#20a8e0 98% 100%)"></i><i style="background:linear-gradient(90deg,#10a0d8 0% 2%,#c080e0 2% 4%,#9a80e0 4% 6%,#7380e0 6% 8%,#4d80e0 8% 10%,#2680e0 10% 12%,#0080e0 12% 14%,#c060e0 14% 16%,#9a60e0 16% 18%,#7360e0 18% 20%,#4d60e0 20% 22%,#2660e0 22% 24%,#0060e0 24% 26%,#c040e0 26% 28%,#9a40e0 28% 30%,#7340e0 30% 32%,#4d40e0 32% 34%,#2640e0 34% 36%,#0040e0 36% 38%,#c020e0 38% 40%,#9a20e0 40% 42%,#7320e0 42% 44%,#4d20e0 44% 46%,#2620e0 46% 48%,#0020e0 48% 50%,#c000e0 50% 52%,#9a00e0 52% 54%,#7300e0 54% 56%,#4d00e0 56% 58%,#2600e0 58% 60%,#0000e0 60% 62%,#b0d8b8 62% 64%,#8dd8b6 64% 66%,#6ad8b5 66% 68%,#46d8b3 68% 70%,#23d8b2 70% 72%,#00d8b0 72% 74%,#d0b8b8 74% 76%,#d093b6 76% 78%,#d06eb5 78% 80%,#d04ab3 80% 82%,#d025b2 82% 84%,#d000b0 84% 86%,#b0d890 86% 88%,#8dd88d 88% 90%,#6ad88a 90% 92%,#46d886 92% 94%,#23d883 94% 96%,#00d880 96% 98%,#d0a880 98% 100%)"></i><i style="background:linear-gradient(90deg,#e08080 0% 2%,#e06084 2% 4%,#e04088 4% 6%,#e0208c 6% 8%,#e00090 8% 10%,#b0e060 10% 12%,#8de060 12% 14%,#6ae060 14% 16%,#46e060 16% 18%,#23e060 18% 20%,#00e060 20% 22%,#e0b060 22% 24%,#e08d60 24% 26%,#e06a60 26% 28%,#e04660 28% 30%,#e02360 30% 32%,#e00060 32% 34%,#b0e040 34% 36%,#8de040 36% 38%,#6ae040 38% 40%,#46e040 40% 42%,#23e040 42% 44%,#00e040 44% 46%,#e0a040 46% 48%,#e08040 48% 50%,#e06040 50% 52%,#e04040 52% 54%,#e02040 54% 56%,#e00040 56% 58%,#b0d820 58% 60%,#8dd820 60% 62%,#6ad820 62% 64%,#46d820 64% 66%,#23d820 66% 68%,#00d820 68% 70%,#e0b020 70% 72%,#e08d20 72% 74%,#e06a20 74% 76%,#e04620 76% 78%,#e02320 78% 80%,#e00020 80% 82%,#b0e000 82% 84%,#8de000 84% 86%,#6ae000 86% 88%,#46e000 88% 90%,#23e000 90% 92%,#00e000 92% 94%,#e0b000 94% 96%,#e08800 96% 98%,#e06000 98% 100%)"></i><i style="background:linear-gradient(90deg,#e04000 0% 2%,#e02000 2% 4%,#e00000 4% 6%,#9090c0 6% 8%,#6c8cc0 8% 10%,#4888c0 10% 12%,#2484c0 12% 14%,#0080c0 14% 16%,#a060b0 16% 18%,#7860b0 18% 20%,#5060b0 20% 22%,#2860b0 22% 24%,#0060b0 24% 26%,#a040b0 26% 28%,#783cb0 28% 30%,#5038b0 30% 32%,#2834b0 32% 34%,#0030b0 34% 36%,#a010b0 36% 38%,#7810b0 38% 40%,#5010b0 40% 42%,#2810b0 42% 44%,#0010b0 44% 46%,#a000b0 46% 48%,#7800ac 48% 50%,#5000a8 50% 52%,#2800a4 52% 54%,#0000a0 54% 56%,#90b0a0 56% 58%,#6cac9c 58% 60%,#48a898 60% 62%,#24a494 62% 64%,#00a090 64% 66%,#a08090 66% 68%,#a06090 68% 70%,#a04090 70% 72%,#a02090 72% 74%,#a00090 74% 76%,#80a070 76% 78%,#60a070 78% 80%,#40a070 80% 82%,#20a070 82% 84%,#00a070 84% 86%,#a08070 86% 88%,#a06070 88% 90%,#a04070 90% 92%,#a02070 92% 94%,#a00070 94% 96%,#a06040 96% 98%,#80a040 98% 100%)"></i><i style="background:linear-gradient(90deg,#60a030 0% 2%,#40a030 2% 4%,#20a030 4% 6%,#00a030 6% 8%,#c09030 8% 10%,#c06c30 10% 12%,#c04830 12% 14%,#c02430 14% 16%,#c00030 16% 18%,#a0b020 18% 20%,#78ac1c 20% 22%,#50a818 22% 24%,#28a414 24% 26%,#00a010 26% 28%,#c08020 28% 30%,#c06020 30% 32%,#c04020 32% 34%,#c02020 34% 36%,#c00020 36% 38%,#a0a000 38% 40%,#78a000 40% 42%,#50a000 42% 44%,#28a000 44% 46%,#00a000 46% 48%,#c08000 48% 50%,#b86000 50% 52%,#b04000 52% 54%,#a82000 54% 56%,#a00000 56% 58%,#505070 58% 60%,#3c5070 60% 62%,#285070 62% 64%,#145070 64% 66%,#005070 66% 68%,#604070 68% 70%,#484070 70% 72%,#304070 72% 74%,#184070 74% 76%,#004070 76% 78%,#600070 78% 80%,#4d0073 80% 82%,#3a0076 82% 84%,#26007a 84% 86%,#13007d 86% 88%,#000080 88% 90%,#506050 90% 92%,#356050 92% 94%,#1b6050 94% 96%,#006050 96% 98%,#604858 98% 100%)"></i><i style="background:linear-gradient(90deg,#804060 0% 2%,#782060 2% 4%,#700060 4% 6%,#607050 6% 8%,#406b4b 8% 10%,#206545 10% 12%,#006040 12% 14%,#805040 14% 16%,#7b3540 16% 18%,#751b40 18% 20%,#700040 20% 22%,#606020 22% 24%,#486020 24% 26%,#306020 26% 28%,#186020 28% 30%,#006020 30% 32%,#806020 32% 34%,#7b4020 34% 36%,#752020 36% 38%,#700020 38% 40%,#206820 40% 42%,#706000 42% 44%,#4b6000 44% 46%,#256000 46% 48%,#006000 48% 50%,#806000 50% 52%,#7b4000 52% 54%,#752000 54% 56%,#700000 56% 58%,#404048 58% 60%,#003848 60% 62%,#101040 62% 64%,#404838 64% 66%,#204000 66% 68%,#204800 68% 70%,#181830 70% 72%,#102030 72% 74%,#002030 74% 76%,#201028 76% 78%,#101028 78% 80%,#001028 80% 82%,#200820 82% 84%,#100820 84% 86%,#000820 86% 88%,#203018 88% 90%,#103010 90% 92%,#003010 92% 94%,#301010 94% 96%,#200810 96% 98%,#300820 98% 100%)"></i><i style="background:linear-gradient(90deg,#203820 0% 2%,#103418 2% 4%,#003010 4% 6%,#402010 6% 8%,#381010 8% 10%,#300010 10% 12%,#203010 12% 14%,#103008 14% 16%,#003000 16% 18%,#402000 18% 20%,#381000 20% 22%,#300000 22% 24%,#000000 24% 26%,#000000 26% 28%,#000000 28% 30%,#000000 30% 32%,#000000 32% 34%,#000000 34% 36%,#000000 36% 38%,#000000 38% 40%,#000000 40% 42%,#000000 42% 44%,#000000 44% 46%,#000000 46% 48%,#000000 48% 50%,#000000 50% 52%,#000000 52% 54%,#000000 54% 56%,#000000 56% 58%,#f0e010 58% 60%,#f0a0e0 60% 62%,#e040e0 62% 64%,#ffb0a0 64% 66%,#ff8da6 66% 68%,#ff6aad 68% 70%,#ff46b3 70% 72%,#ff23ba 72% 74%,#ff00c0 74% 76%,#ffb070 76% 78%,#ff8d76 78% 80%,#ff6a7d 80% 82%,#ff4683 82% 84%,#ff238a 84% 86%,#ff0090 86% 88%,#ffb050 88% 90%,#ff8d4d 90% 92%,#ff6a4a 92% 94%,#ff4646 94% 96%,#ff2343 96% 98%,#ff0040 98% 100%)"></i><i style="background:linear-gradient(90deg,#ffb040 0% 2%,#ff8d40 2% 4%,#ff6a40 4% 6%,#ff4640 6% 8%,#ff2340 8% 10%,#ff0040 10% 12%,#ffc020 12% 14%,#ff9a23 14% 16%,#ff7326 16% 18%,#ff4d2a 18% 20%,#ff262d 20% 22%,#ff0030 22% 24%,#ffc000 24% 26%,#ff9a00 26% 28%,#ff7300 28% 30%,#ff4d00 30% 32%,#ff2600 32% 34%,#ff0000 34% 36%,#e0b0c0 36% 38%,#e084c0 38% 40%,#e058c0 40% 42%,#e02cc0 42% 44%,#e000c0 44% 46%,#e0d8a0 46% 48%,#e0d678 48% 50%,#e0d450 50% 52%,#e0d228 52% 54%,#e0d000 54% 56%,#d8a0c0 56% 58%,#d06bc0 58% 60%,#c835c0 60% 62%,#c000c0 62% 64%,#d8c890 64% 66%,#d8c360 66% 68%,#d8bd30 68% 70%,#d8b800 70% 72%,#e8e040 72% 74%,#e0e000 74% 76%,#9080b0 76% 78%,#0080b0 78% 80%,#a000a0 80% 82%,#0000a0 82% 84%,#ffa080 84% 86%,#ff8080 86% 88%,#ff6080 88% 90%,#ff4080 90% 92%,#ff2080 92% 94%,#ff0080 94% 96%,#90d870 96% 98%,#00d870 98% 100%)"></i><i style="background:linear-gradient(90deg,#ffa060 0% 2%,#ff8060 2% 4%,#ff6060 4% 6%,#ff4060 6% 8%,#ff2060 8% 10%,#ff0060 10% 12%,#ffb050 12% 14%,#ff8d50 14% 16%,#ff6a50 16% 18%,#ff4650 18% 20%,#ff2350 20% 22%,#ff0050 22% 24%,#ffa030 24% 26%,#ff8030 26% 28%,#ff6030 28% 30%,#ff4030 30% 32%,#ff2030 32% 34%,#ff0030 34% 36%,#ffa000 36% 38%,#ff8000 38% 40%,#ff6000 40% 42%,#ff4000 42% 44%,#ff2000 44% 46%,#ff0000 46% 48%,#a0d000 48% 50%,#00d000 50% 52%,#ffb000 52% 54%,#ff8d00 54% 56%,#ff6a00 56% 58%,#ff4600 58% 60%,#ff2300 60% 62%,#ff0000 62% 64%,#e8a0a0 64% 66%,#e678a0 66% 68%,#e450a0 68% 70%,#e228a0 70% 72%,#e000a0 72% 74%,#e8c080 74% 76%,#e6bc60 76% 78%,#e4b840 78% 80%,#e2b420 80% 82%,#e0b000 82% 84%,#d08090 84% 86%,#cb5595 86% 88%,#c52b9b 88% 90%,#c000a0 90% 92%,#d0a060 92% 94%,#d0a040 94% 96%,#d0a020 96% 98%,#d0a000 98% 100%)"></i><i style="background:linear-gradient(90deg,#a05070 0% 2%,#a02870 2% 4%,#a00070 4% 6%,#a08840 6% 8%,#a08420 8% 10%,#a08000 10% 12%,#704050 12% 14%,#702048 14% 16%,#700040 16% 18%,#705830 18% 20%,#705418 20% 22%,#705000 22% 24%,#302020 24% 26%,#300020 26% 28%,#302a10 28% 30%,#302800 30% 32%,#ffb040 32% 34%,#ffa040 34% 36%,#00c020 36% 38%,#a0b080 38% 40%,#e0b060 40% 42%,#404830 42% 44%,#ffa080 44% 46%,#ff8080 46% 48%,#ff6080 48% 50%,#ff4080 50% 52%,#ff2080 52% 54%,#ff0080 54% 56%,#ffa050 56% 58%,#ff804d 58% 60%,#ff604a 60% 62%,#ff4046 62% 64%,#ff2043 64% 66%,#ff0040 66% 68%,#ffa030 68% 70%,#ff8030 70% 72%,#ff6030 72% 74%,#ff4030 74% 76%,#ff2030 76% 78%,#ff0030 78% 80%,#ffa020 80% 82%,#ff801d 82% 84%,#ff601a 84% 86%,#ff4016 86% 88%,#ff2013 88% 90%,#ff0010 90% 92%,#ffa000 92% 94%,#ff8010 94% 96%,#ff6010 96% 98%,#ff4020 98% 100%)"></i><i style="background:linear-gradient(90deg,#ff2020 0% 2%,#ff0000 2% 4%,#ffa000 4% 6%,#ff8000 6% 8%,#ff6000 8% 10%,#ff4000 10% 12%,#ff2000 12% 14%,#ff0000 14% 16%,#00b080 16% 18%,#e0b060 18% 20%,#e03050 20% 22%,#ff9040 22% 24%,#ff7343 24% 26%,#ff5646 26% 28%,#ff3a4a 28% 30%,#ff1d4d 30% 32%,#ff0050 32% 34%,#ff9040 34% 36%,#ff7340 36% 38%,#ff5640 38% 40%,#ff3a40 40% 42%,#ff1d40 42% 44%,#ff0040 44% 46%,#ff9020 46% 48%,#ff7320 48% 50%,#ff5620 50% 52%,#ff3a20 52% 54%,#ff1d20 54% 56%,#ff0020 56% 58%,#ffa020 58% 60%,#ff801a 60% 62%,#ff6013 62% 64%,#ff400d 64% 66%,#ff2006 66% 68%,#ff0000 68% 70%,#ffa000 70% 72%,#ff8000 72% 74%,#ff6000 74% 76%,#ff4000 76% 78%,#ff2000 78% 80%,#ff0000 80% 82%,#ffa000 82% 84%,#ff8000 84% 86%,#ff6000 86% 88%,#ff4000 88% 90%,#ff2000 90% 92%,#ff0000 92% 94%,#e09060 94% 96%,#e06050 96% 98%,#e03050 98% 100%)"></i><i style="background:linear-gradient(90deg,#e02060 0% 2%,#e00060 2% 4%,#e0a040 4% 6%,#e0a030 6% 8%,#e0a020 8% 10%,#e0a010 10% 12%,#e0a000 12% 14%,#d07040 14% 16%,#d04b40 16% 18%,#d02540 18% 20%,#d00040 20% 22%,#d09040 22% 24%,#d0902b 24% 26%,#d09015 26% 28%,#d09000 28% 30%,#a04030 30% 32%,#a02030 32% 34%,#a00030 34% 36%,#a07020 36% 38%,#a06810 38% 40%,#a06000 40% 42%,#702020 42% 44%,#701020 44% 46%,#700020 46% 48%,#704010 48% 50%,#704010 50% 52%,#704010 52% 54%,#203020 54% 56%,#208040 56% 58%,#201810 58% 60%,#ff8020 60% 62%,#ff6620 62% 64%,#ff4d20 64% 66%,#ff3320 66% 68%,#ff1a20 68% 70%,#ff0020 70% 72%,#ff8020 72% 74%,#ff6620 74% 76%,#ff4d20 76% 78%,#ff3320 78% 80%,#ff1a20 80% 82%,#ff0020 82% 84%,#ff8020 84% 86%,#ff6620 86% 88%,#ff4d20 88% 90%,#ff3320 90% 92%,#ff1a20 92% 94%,#ff0020 94% 96%,#ff8010 96% 98%,#ff6010 98% 100%)"></i><i style="background:linear-gradient(90deg,#ff5010 0% 2%,#ff350b 2% 4%,#ff1b05 4% 6%,#ff0000 6% 8%,#ff8000 8% 10%,#ff6600 10% 12%,#ff4d00 12% 14%,#ff3300 14% 16%,#ff1a00 16% 18%,#ff0000 18% 20%,#ff8000 20% 22%,#ff6600 22% 24%,#ff4d00 24% 26%,#ff3300 26% 28%,#ff1a00 28% 30%,#ff0000 30% 32%,#e07030 32% 34%,#e05430 34% 36%,#e03830 36% 38%,#e01c30 38% 40%,#e00030 40% 42%,#e89020 42% 44%,#e68c18 44% 46%,#e48810 46% 48%,#e28408 48% 50%,#e08000 50% 52%,#a04800 52% 54%,#006000 54% 56%,#c00000 56% 58%,#000000 58% 60%,#ff7000 60% 62%,#ff5a00 62% 64%,#ff4300 64% 66%,#ff2d00 66% 68%,#ff1600 68% 70%,#ff0000 70% 72%,#a08800 72% 74%,#009000 74% 76%,#ff7000 76% 78%,#ff5a00 78% 80%,#ff4300 80% 82%,#ff2d00 82% 84%,#ff1600 84% 86%,#ff0000 86% 88%,#ff7000 88% 90%,#ff5d00 90% 92%,#ff4a00 92% 94%,#ff3600 94% 96%,#ff2300 96% 98%,#ff1000 98% 100%)"></i><i style="background:linear-gradient(90deg,#ff7000 0% 2%,#ff5a00 2% 4%,#ff4300 4% 6%,#ff2d00 6% 8%,#ff1600 8% 10%,#ff0000 10% 12%,#ff8000 12% 14%,#ff6600 14% 16%,#ff4d00 16% 18%,#ff3300 18% 20%,#ff1a00 20% 22%,#ff0000 22% 24%,#a09000 24% 26%,#009000 26% 28%,#ff7000 28% 30%,#ff5a00 30% 32%,#ff4300 32% 34%,#ff2d00 34% 36%,#ff1600 36% 38%,#ff0000 38% 40%,#e06000 40% 42%,#e04800 42% 44%,#e03000 44% 46%,#e01800 46% 48%,#e00000 48% 50%,#e88000 50% 52%,#e88000 52% 54%,#e88000 54% 56%,#e88000 56% 58%,#e88000 58% 60%,#208000 60% 62%,#e06000 62% 64%,#e04000 64% 66%,#e02000 66% 68%,#e00000 68% 70%,#d87000 70% 72%,#d87000 72% 74%,#d87000 74% 76%,#d87000 76% 78%,#005000 78% 80%,#a03000 80% 82%,#b01800 82% 84%,#c00000 84% 86%,#a05000 86% 88%,#a05000 88% 90%,#a05000 90% 92%,#702000 92% 94%,#701000 94% 96%,#700000 96% 98%,#704000 98% 100%)"></i><i style="background:linear-gradient(90deg,#603000 0% 2%,#703010 2% 4%,#102000 4% 6%,#401800 6% 8%,#300000 8% 10%,#402000 10% 12%,#302000 12% 14%,#000000 14% 16%,#000000 16% 18%,#000000 18% 20%,#000000 20% 22%,#b0b0b0 22% 24%,#8daeb3 24% 26%,#6aadb6 26% 28%,#46abba 28% 30%,#23aabd 30% 32%,#00a8c0 32% 34%,#b080c0 34% 36%,#8480c0 36% 38%,#5880c0 38% 40%,#2c80c0 40% 42%,#0080c0 42% 44%,#b060b0 44% 46%,#9363b3 46% 48%,#7565b5 48% 50%,#5868b8 50% 52%,#3b6bbb 52% 54%,#1d6dbd 54% 56%,#0070c0 56% 58%,#b040c0 58% 60%,#8d40c0 60% 62%,#6a40c0 62% 64%,#4640c0 64% 66%,#2340c0 66% 68%,#0040c0 68% 70%,#b000c0 70% 72%,#8d00c0 72% 74%,#6a00c0 74% 76%,#4600c0 76% 78%,#2300c0 78% 80%,#0000c0 80% 82%,#b000c0 82% 84%,#8d00c0 84% 86%,#6a00c0 86% 88%,#4600c0 88% 90%,#2300c0 90% 92%,#0000c0 92% 94%,#a0b080 94% 96%,#80b080 96% 98%,#60b090 98% 100%)"></i><i style="background:linear-gradient(90deg,#40b090 0% 2%,#20b090 2% 4%,#00b090 4% 6%,#b08090 6% 8%,#8d8090 8% 10%,#6a8090 10% 12%,#468090 12% 14%,#238090 14% 16%,#008090 16% 18%,#b06080 18% 20%,#8d6083 20% 22%,#6a6086 22% 24%,#46608a 24% 26%,#23608d 26% 28%,#006090 28% 30%,#b04080 30% 32%,#8d4086 32% 34%,#6a408d 34% 36%,#464093 36% 38%,#23409a 38% 40%,#0040a0 40% 42%,#b020a0 42% 44%,#8d20a0 44% 46%,#6a20a0 46% 48%,#4620a0 48% 50%,#2320a0 50% 52%,#0020a0 52% 54%,#b00090 54% 56%,#8d0090 56% 58%,#6a0090 58% 60%,#460090 60% 62%,#230090 62% 64%,#000090 64% 66%,#b0b060 66% 68%,#8db360 68% 70%,#6ab660 70% 72%,#46ba60 72% 74%,#23bd60 74% 76%,#00c060 76% 78%,#b08060 78% 80%,#8d8060 80% 82%,#6a8060 82% 84%,#468060 84% 86%,#238060 86% 88%,#008060 88% 90%,#b06060 90% 92%,#806060 92% 94%,#606060 94% 96%,#406060 96% 98%,#206060 98% 100%)"></i><i style="background:linear-gradient(90deg,#007070 0% 2%,#c04060 2% 4%,#9a4063 4% 6%,#734066 6% 8%,#4d406a 8% 10%,#26406d 10% 12%,#004070 12% 14%,#c00070 14% 16%,#9a0070 16% 18%,#730070 18% 20%,#4d0070 20% 22%,#260070 22% 24%,#000070 24% 26%,#c00070 26% 28%,#9a0070 28% 30%,#730070 30% 32%,#4d0070 32% 34%,#260070 34% 36%,#000070 36% 38%,#b0b040 38% 40%,#8db340 40% 42%,#6ab640 42% 44%,#46ba40 44% 46%,#23bd40 46% 48%,#00c040 48% 50%,#c08040 50% 52%,#9a8040 52% 54%,#738040 54% 56%,#4d8040 56% 58%,#268040 58% 60%,#008040 60% 62%,#c06040 62% 64%,#9a6040 64% 66%,#736040 66% 68%,#4d6040 68% 70%,#266040 70% 72%,#006040 72% 74%,#c04040 74% 76%,#9a4040 76% 78%,#734040 78% 80%,#4d4040 80% 82%,#264040 82% 84%,#004040 84% 86%,#c02040 86% 88%,#9a2040 88% 90%,#732040 90% 92%,#4d2040 92% 94%,#262040 94% 96%,#002040 96% 98%,#c00040 98% 100%)"></i><i style="background:linear-gradient(90deg,#900040 0% 2%,#6c0044 2% 4%,#480048 4% 6%,#24004c 6% 8%,#000050 8% 10%,#b0b020 10% 12%,#8db020 12% 14%,#6ab020 14% 16%,#46b020 16% 18%,#23b020 18% 20%,#00b020 20% 22%,#b08020 22% 24%,#8d8020 24% 26%,#6a8020 26% 28%,#468020 28% 30%,#238020 30% 32%,#008020 32% 34%,#b06020 34% 36%,#8d6020 36% 38%,#6a6020 38% 40%,#466020 40% 42%,#236020 42% 44%,#006020 44% 46%,#b04020 46% 48%,#8d4020 48% 50%,#6a4020 50% 52%,#464020 52% 54%,#234020 54% 56%,#004020 56% 58%,#c02020 58% 60%,#9a2020 60% 62%,#732020 62% 64%,#4d2020 64% 66%,#262020 66% 68%,#002020 68% 70%,#c00020 70% 72%,#9a0020 72% 74%,#730020 74% 76%,#4d0020 76% 78%,#260020 78% 80%,#000020 80% 82%,#c0c000 82% 84%,#9ac000 84% 86%,#73c000 86% 88%,#4dc000 88% 90%,#26c000 90% 92%,#00c000 92% 94%,#c09000 94% 96%,#808000 96% 98%,#60a000 98% 100%)"></i><i style="background:linear-gradient(90deg,#308000 0% 2%,#188000 2% 4%,#008000 4% 6%,#c06000 6% 8%,#9a6000 8% 10%,#736000 10% 12%,#4d6000 12% 14%,#266000 14% 16%,#006000 16% 18%,#b03000 18% 20%,#8d3000 20% 22%,#6a3000 22% 24%,#463000 24% 26%,#233000 26% 28%,#003000 28% 30%,#c02000 30% 32%,#9a2000 32% 34%,#732000 34% 36%,#4d2000 36% 38%,#262000 38% 40%,#002000 40% 42%,#c00000 42% 44%,#980000 44% 46%,#700000 46% 48%,#480000 48% 50%,#200000 50% 52%,#000000 52% 54%,#909090 54% 56%,#609090 56% 58%,#309090 58% 60%,#009090 60% 62%,#906090 62% 64%,#6c6090 64% 66%,#486090 66% 68%,#246090 68% 70%,#006090 70% 72%,#903090 72% 74%,#6c3090 74% 76%,#483090 76% 78%,#243090 78% 80%,#003090 80% 82%,#900090 82% 84%,#6c0094 84% 86%,#480098 86% 88%,#24009c 88% 90%,#0000a0 90% 92%,#900090 92% 94%,#600080 94% 96%,#400090 96% 98%,#200090 98% 100%)"></i><i style="background:linear-gradient(90deg,#2000a0 0% 2%,#0000a0 2% 4%,#909070 4% 6%,#6c8c70 6% 8%,#488870 8% 10%,#248470 10% 12%,#008070 12% 14%,#906070 14% 16%,#6c6070 16% 18%,#486070 18% 20%,#246070 20% 22%,#006070 22% 24%,#903080 24% 26%,#6c307c 26% 28%,#483078 28% 30%,#243074 30% 32%,#003070 32% 34%,#900080 34% 36%,#6c007c 36% 38%,#480078 38% 40%,#240074 40% 42%,#000070 42% 44%,#900070 44% 46%,#6c0074 46% 48%,#480078 48% 50%,#24007c 50% 52%,#000080 52% 54%,#909040 54% 56%,#6c8c40 56% 58%,#488840 58% 60%,#248440 60% 62%,#008040 62% 64%,#906040 64% 66%,#6c6040 66% 68%,#486040 68% 70%,#246040 70% 72%,#006040 72% 74%,#903040 74% 76%,#6c3040 76% 78%,#483040 78% 80%,#243040 80% 82%,#003040 82% 84%,#900040 84% 86%,#6c0040 86% 88%,#480040 88% 90%,#240040 90% 92%,#000040 92% 94%,#900030 94% 96%,#700030 96% 98%,#400040 98% 100%)"></i><i style="background:linear-gradient(90deg,#200020 0% 2%,#000020 2% 4%,#909020 4% 6%,#6c8c20 6% 8%,#488820 8% 10%,#248420 10% 12%,#008020 12% 14%,#906020 14% 16%,#6c6020 16% 18%,#486020 18% 20%,#246020 20% 22%,#006020 22% 24%,#903020 24% 26%,#6c2c1c 26% 28%,#482818 28% 30%,#242414 30% 32%,#002010 32% 34%,#901010 34% 36%,#6c1010 36% 38%,#481010 38% 40%,#241010 40% 42%,#001010 42% 44%,#900010 44% 46%,#6c0010 46% 48%,#480010 48% 50%,#240010 50% 52%,#000010 52% 54%,#909000 54% 56%,#6c8c00 56% 58%,#488800 58% 60%,#248400 60% 62%,#008000 62% 64%,#906000 64% 66%,#6c6000 66% 68%,#486000 68% 70%,#246000 70% 72%,#006000 72% 74%,#a04000 74% 76%,#783c00 76% 78%,#503800 78% 80%,#283400 80% 82%,#003000 82% 84%,#901000 84% 86%,#6c1000 86% 88%,#481000 88% 90%,#241000 90% 92%,#001000 92% 94%,#900000 94% 96%,#700000 96% 98%,#300000 98% 100%)"></i><i style="background:linear-gradient(90deg,#100000 0% 2%,#000000 2% 4%,#505858 4% 6%,#35555b 6% 8%,#1b535d 8% 10%,#005060 10% 12%,#503860 12% 14%,#353b60 14% 16%,#1b3d60 16% 18%,#004060 18% 20%,#502060 20% 22%,#352060 22% 24%,#1b2060 24% 26%,#002060 26% 28%,#500050 28% 30%,#350060 30% 32%,#1b0070 32% 34%,#000080 34% 36%,#505040 36% 38%,#355540 38% 40%,#1b5b40 40% 42%,#006040 42% 44%,#504040 44% 46%,#354343 46% 48%,#1b4545 48% 50%,#004848 50% 52%,#502848 52% 54%,#352848 54% 56%,#1b2848 56% 58%,#002848 58% 60%,#500048 60% 62%,#350048 62% 64%,#1b0048 64% 66%,#000048 66% 68%,#505020 68% 70%,#355520 70% 72%,#1b5b20 72% 74%,#006020 74% 76%,#503020 76% 78%,#353020 78% 80%,#1b3020 80% 82%,#003020 82% 84%,#502020 84% 86%,#352020 86% 88%,#1b2020 88% 90%,#002020 90% 92%,#500020 92% 94%,#350025 94% 96%,#1b002b 96% 98%,#000030 98% 100%)"></i><i style="background:linear-gradient(90deg,#505000 0% 2%,#355000 2% 4%,#1b5000 4% 6%,#005000 6% 8%,#503000 8% 10%,#353000 10% 12%,#1b3000 12% 14%,#003000 14% 16%,#501000 16% 18%,#351000 18% 20%,#1b1000 20% 22%,#001000 22% 24%,#500000 24% 26%,#350000 26% 28%,#1b0000 28% 30%,#000000 30% 32%,#301840 32% 34%,#201835 34% 36%,#10182b 36% 38%,#001820 38% 40%,#200818 40% 42%,#1a0818 42% 44%,#130818 44% 46%,#0d0818 46% 48%,#060818 48% 50%,#000818 50% 52%,#202000 52% 54%,#152000 54% 56%,#0b2000 56% 58%,#002000 58% 60%,#200010 60% 62%,#150010 62% 64%,#0b0010 64% 66%,#000010 66% 68%,#202000 68% 70%,#152000 70% 72%,#0b2000 72% 74%,#002000 74% 76%,#201000 76% 78%,#151000 78% 80%,#0b1000 80% 82%,#001000 82% 84%,#200000 84% 86%,#1b0000 86% 88%,#170000 88% 90%,#120000 90% 92%,#0e0000 92% 94%,#090000 94% 96%,#050000 96% 98%,#000000 98% 100%)"></i><i style="background:linear-gradient(90deg,#000000 0% 2%,#000000 2% 4%,#000000 4% 6%,#e0e000 6% 8%,#d0c8c0 8% 10%,#d8a0d0 10% 12%,#d678d0 12% 14%,#d450d0 14% 16%,#d228d0 16% 18%,#d000d0 18% 20%,#d8d090 20% 22%,#d8a090 22% 24%,#a0a090 24% 26%,#e08090 26% 28%,#a08090 28% 30%,#d06090 30% 32%,#a060a0 32% 34%,#e040a0 34% 36%,#a020a0 36% 38%,#e000c0 38% 40%,#a000a0 40% 42%,#e0d070 42% 44%,#e0a070 44% 46%,#a0a070 46% 48%,#e08070 48% 50%,#a08070 50% 52%,#808070 52% 54%,#e05070 54% 56%,#a05070 56% 58%,#805070 58% 60%,#e02070 60% 62%,#a02070 62% 64%,#802070 64% 66%,#e00070 66% 68%,#a00070 68% 70%,#800070 70% 72%,#d8c840 72% 74%,#e0a040 74% 76%,#a0a040 76% 78%,#e08040 78% 80%,#a08040 80% 82%,#808040 82% 84%,#e05040 84% 86%,#a05040 86% 88%,#805040 88% 90%,#505040 90% 92%,#e02040 92% 94%,#a02040 94% 96%,#802040 96% 98%,#502040 98% 100%)"></i><i style="background:linear-gradient(90deg,#e00050 0% 2%,#b00050 2% 4%,#800050 4% 6%,#500050 6% 8%,#d8c020 8% 10%,#d8a020 10% 12%,#a0a020 12% 14%,#d88020 14% 16%,#a08020 16% 18%,#808020 18% 20%,#e05020 20% 22%,#a04020 22% 24%,#804020 24% 26%,#505020 26% 28%,#e02020 28% 30%,#b02020 30% 32%,#802020 32% 34%,#502020 34% 36%,#202020 36% 38%,#e00020 38% 40%,#a00020 40% 42%,#800020 42% 44%,#500020 44% 46%,#200020 46% 48%,#e0c000 48% 50%,#e0a000 50% 52%,#a0a000 52% 54%,#e08000 54% 56%,#a08000 56% 58%,#808000 58% 60%,#e05000 60% 62%,#a05000 62% 64%,#805000 64% 66%,#505000 66% 68%,#e02000 68% 70%,#b02000 70% 72%,#802000 72% 74%,#502000 74% 76%,#202000 76% 78%,#e00000 78% 80%,#b00000 80% 82%,#800000 82% 84%,#500000 84% 86%,#200000 86% 88%,#000000 88% 90%,#f0b0a0 90% 92%,#f084a0 92% 94%,#f058a0 94% 96%,#f02ca0 96% 98%,#f000a0 98% 100%)"></i><i style="background:linear-gradient(90deg,#e8b080 0% 2%,#ee8480 2% 4%,#f45880 4% 6%,#f92c80 6% 8%,#ff0080 8% 10%,#e8a040 10% 12%,#ee7840 12% 14%,#f45040 14% 16%,#f92840 16% 18%,#ff0040 18% 20%,#e8b020 20% 22%,#ee8418 22% 24%,#f45810 24% 26%,#f92c08 26% 28%,#ff0000 28% 30%,#e8c000 30% 32%,#ee9000 32% 34%,#f46000 34% 36%,#f93000 36% 38%,#ff0000 38% 40%,#d8a0a0 40% 42%,#d56ba0 42% 44%,#d335a0 44% 46%,#d000a0 46% 48%,#d8a060 48% 50%,#e08080 50% 52%,#e04080 52% 54%,#e00080 54% 56%,#e0b040 56% 58%,#e08040 58% 60%,#e04040 60% 62%,#e00040 62% 64%,#e0b000 64% 66%,#e08000 66% 68%,#e04000 68% 70%,#e00000 70% 72%,#d8b090 72% 74%,#d68d93 74% 76%,#d56a96 76% 78%,#d3469a 78% 80%,#d2239d 80% 82%,#d000a0 82% 84%,#d8c070 84% 86%,#d88070 86% 88%,#a08070 88% 90%,#008070 90% 92%,#d86070 92% 94%,#a06070 94% 96%,#d04070 96% 98%,#a04070 98% 100%)"></i><i style="background:linear-gradient(90deg,#e03070 0% 2%,#a02870 2% 4%,#e00070 4% 6%,#a00070 6% 8%,#000070 8% 10%,#d8b060 10% 12%,#d89060 12% 14%,#a09060 14% 16%,#d86060 16% 18%,#a06050 18% 20%,#706050 20% 22%,#d84050 22% 24%,#a04050 24% 26%,#704050 26% 28%,#d82050 28% 30%,#a02050 30% 32%,#702050 32% 34%,#e00050 34% 36%,#a00050 36% 38%,#700050 38% 40%,#d8b040 40% 42%,#d89040 42% 44%,#a09040 44% 46%,#d86040 46% 48%,#a06040 48% 50%,#807040 50% 52%,#d84040 52% 54%,#a04040 54% 56%,#704040 56% 58%,#404040 58% 60%,#e02040 60% 62%,#a02040 62% 64%,#702040 64% 66%,#402040 66% 68%,#e00040 68% 70%,#a00040 70% 72%,#700040 72% 74%,#400040 74% 76%,#d8b020 76% 78%,#d89020 78% 80%,#a09020 80% 82%,#d87020 82% 84%,#a07020 84% 86%,#707020 86% 88%,#d84020 88% 90%,#a04020 90% 92%,#704020 92% 94%,#404020 94% 96%,#e02020 96% 98%,#a02020 98% 100%)"></i><i style="background:linear-gradient(90deg,#802020 0% 2%,#502020 2% 4%,#202020 4% 6%,#e01020 6% 8%,#a01020 8% 10%,#700020 10% 12%,#400010 12% 14%,#200010 14% 16%,#e0b000 16% 18%,#e08000 18% 20%,#a09000 20% 22%,#009000 22% 24%,#e07000 24% 26%,#a07000 26% 28%,#807000 28% 30%,#e04000 30% 32%,#b04000 32% 34%,#804000 34% 36%,#505000 36% 38%,#e02000 38% 40%,#a02000 40% 42%,#802000 42% 44%,#503000 44% 46%,#202000 46% 48%,#e00000 48% 50%,#c00000 50% 52%,#900000 52% 54%,#600000 54% 56%,#300000 56% 58%,#000000 58% 60%,#f0a080 60% 62%,#f07880 62% 64%,#f05080 64% 66%,#f02880 66% 68%,#f00080 68% 70%,#f0a060 70% 72%,#f07860 72% 74%,#f05060 74% 76%,#f02860 76% 78%,#f00060 78% 80%,#f0a040 80% 82%,#f07840 82% 84%,#f05040 84% 86%,#f02840 86% 88%,#f00040 88% 90%,#f0a020 90% 92%,#f07818 92% 94%,#f05010 94% 96%,#f02808 96% 98%,#f00000 98% 100%)"></i><i style="background:linear-gradient(90deg,#e8a000 0% 2%,#ee7800 2% 4%,#f45000 4% 6%,#f92800 6% 8%,#ff0000 8% 10%,#e0a080 10% 12%,#e06b80 12% 14%,#e03580 14% 16%,#e00080 16% 18%,#e0a060 18% 20%,#e06b60 20% 22%,#e03560 22% 24%,#e00060 24% 26%,#e0a040 26% 28%,#e06b40 28% 30%,#e03540 30% 32%,#e00040 32% 34%,#e0a000 34% 36%,#e08000 36% 38%,#e04000 38% 40%,#e00000 40% 42%,#a05040 42% 44%,#a03040 44% 46%,#b00040 46% 48%,#a06020 48% 50%,#b03020 50% 52%,#b00030 52% 54%,#b06010 54% 56%,#b04000 56% 58%,#b00000 58% 60%,#703020 60% 62%,#702030 62% 64%,#700030 64% 66%,#704010 66% 68%,#702010 68% 70%,#700010 70% 72%,#703000 72% 74%,#702000 74% 76%,#700000 76% 78%,#302010 78% 80%,#300010 80% 82%,#302000 82% 84%,#300000 84% 86%,#006010 86% 88%,#e0a070 88% 90%,#e08073 90% 92%,#e06076 92% 94%,#e0407a 94% 96%,#e0207d 96% 98%,#e00080 98% 100%)"></i><i style="background:linear-gradient(90deg,#d8a060 0% 2%,#d88060 2% 4%,#a08060 4% 6%,#d86060 6% 8%,#a06060 8% 10%,#d04060 10% 12%,#a04060 12% 14%,#d02060 14% 16%,#a02060 16% 18%,#d00060 18% 20%,#a00060 20% 22%,#d8a040 22% 24%,#d88040 24% 26%,#a08040 26% 28%,#d86040 28% 30%,#a06040 30% 32%,#706040 32% 34%,#d84040 34% 36%,#a04040 36% 38%,#704040 38% 40%,#d82040 40% 42%,#a02040 42% 44%,#702040 44% 46%,#e00040 46% 48%,#a00040 48% 50%,#700040 50% 52%,#d8a030 52% 54%,#d88030 54% 56%,#a08030 56% 58%,#d86030 58% 60%,#a06030 60% 62%,#706030 62% 64%,#d84030 64% 66%,#a04030 66% 68%,#704030 68% 70%,#404030 70% 72%,#e02030 72% 74%,#a02030 74% 76%,#702030 76% 78%,#402030 78% 80%,#e00030 80% 82%,#a00030 82% 84%,#700030 84% 86%,#400030 86% 88%,#d8a010 88% 90%,#d88010 90% 92%,#a08010 92% 94%,#d86010 94% 96%,#a06010 96% 98%,#706010 98% 100%)"></i><i style="background:linear-gradient(90deg,#e04020 0% 2%,#a04020 2% 4%,#804020 4% 6%,#404020 6% 8%,#e02020 8% 10%,#a02020 10% 12%,#702020 12% 14%,#502020 14% 16%,#202020 16% 18%,#e00020 18% 20%,#b00020 20% 22%,#800020 22% 24%,#500020 24% 26%,#200020 26% 28%,#e0b000 28% 30%,#e08000 30% 32%,#a08000 32% 34%,#e07000 34% 36%,#b07000 36% 38%,#807000 38% 40%,#e05000 40% 42%,#b04000 42% 44%,#804000 44% 46%,#504000 46% 48%,#e02000 48% 50%,#a02000 50% 52%,#802000 52% 54%,#502000 54% 56%,#202000 56% 58%,#e00000 58% 60%,#b00000 60% 62%,#800000 62% 64%,#500000 64% 66%,#200000 66% 68%,#000000 68% 70%,#109090 70% 72%,#80c040 72% 74%,#003020 74% 76%,#e0a060 76% 78%,#e08060 78% 80%,#e06060 80% 82%,#e04060 82% 84%,#e02060 84% 86%,#e00060 86% 88%,#d8a040 88% 90%,#d88040 90% 92%,#a07040 92% 94%,#d86040 94% 96%,#a05040 96% 98%,#d03040 98% 100%)"></i><i style="background:linear-gradient(90deg,#a04040 0% 2%,#e02040 2% 4%,#a02040 4% 6%,#e00040 6% 8%,#a00040 8% 10%,#e0a030 10% 12%,#e08030 12% 14%,#a08030 14% 16%,#e05030 16% 18%,#a05030 18% 20%,#705030 20% 22%,#e03030 22% 24%,#a03030 24% 26%,#703030 26% 28%,#e02030 28% 30%,#a02030 30% 32%,#702030 32% 34%,#e00030 34% 36%,#a00030 36% 38%,#700030 38% 40%,#e0a020 40% 42%,#e08020 42% 44%,#a08020 44% 46%,#e05020 46% 48%,#a05020 48% 50%,#805020 50% 52%,#d84020 52% 54%,#a04020 54% 56%,#704020 56% 58%,#404020 58% 60%,#e02020 60% 62%,#a02020 62% 64%,#702020 64% 66%,#402020 66% 68%,#e00020 68% 70%,#a00020 70% 72%,#700020 72% 74%,#400020 74% 76%,#e0a010 76% 78%,#e08010 78% 80%,#a08010 80% 82%,#e06010 82% 84%,#a06010 84% 86%,#806010 86% 88%,#e04010 88% 90%,#a04010 90% 92%,#804010 92% 94%,#504010 94% 96%,#e02010 96% 98%,#a02010 98% 100%)"></i><i style="background:linear-gradient(90deg,#801010 0% 2%,#501010 2% 4%,#202010 4% 6%,#e00010 6% 8%,#b00010 8% 10%,#800010 10% 12%,#500010 12% 14%,#200010 14% 16%,#e0a000 16% 18%,#e08000 18% 20%,#a08000 20% 22%,#e06000 22% 24%,#a06000 24% 26%,#806000 26% 28%,#e04000 28% 30%,#a04000 30% 32%,#803000 32% 34%,#503000 34% 36%,#e02000 36% 38%,#a02000 38% 40%,#801000 40% 42%,#501000 42% 44%,#202000 44% 46%,#e00000 46% 48%,#b00000 48% 50%,#900000 50% 52%,#600000 52% 54%,#300000 54% 56%,#000000 56% 58%,#f08040 58% 60%,#f06040 60% 62%,#f04040 62% 64%,#f02040 64% 66%,#f00040 66% 68%,#e08030 68% 70%,#e46030 70% 72%,#e84030 72% 74%,#ec2030 74% 76%,#f00030 76% 78%,#f08020 78% 80%,#f0601c 80% 82%,#f04018 82% 84%,#f02014 84% 86%,#f00010 86% 88%,#f08000 88% 90%,#f06000 90% 92%,#f04000 92% 94%,#f02000 94% 96%,#f00000 96% 98%,#f08000 98% 100%)"></i><i style="background:linear-gradient(90deg,#f07000 0% 2%,#f04b00 2% 4%,#f02500 4% 6%,#f00000 6% 8%,#e08040 8% 10%,#e06040 10% 12%,#e03040 12% 14%,#e00040 14% 16%,#e08030 16% 18%,#e06030 18% 20%,#e03030 20% 22%,#e00030 22% 24%,#e08020 24% 26%,#e06020 26% 28%,#e03020 28% 30%,#e00020 30% 32%,#e08000 32% 34%,#e06000 34% 36%,#e03000 36% 38%,#e00000 38% 40%,#a04020 40% 42%,#a02020 42% 44%,#a00020 44% 46%,#a04010 46% 48%,#a02010 48% 50%,#a00010 50% 52%,#a05000 52% 54%,#b03000 54% 56%,#c00000 56% 58%,#703020 58% 60%,#702020 60% 62%,#700020 62% 64%,#005010 64% 66%,#703010 66% 68%,#701010 68% 70%,#700010 70% 72%,#703000 72% 74%,#702000 74% 76%,#700000 76% 78%,#101000 78% 80%,#201008 80% 82%,#e08040 82% 84%,#e06640 84% 86%,#e04d40 86% 88%,#e03340 88% 90%,#e01a40 90% 92%,#e00040 92% 94%,#e08040 94% 96%,#e06030 96% 98%,#a06020 98% 100%)"></i><i style="background:linear-gradient(90deg,#e05020 0% 2%,#a05020 2% 4%,#e03020 4% 6%,#a03020 6% 8%,#e02020 8% 10%,#a01020 10% 12%,#e00020 12% 14%,#a00020 14% 16%,#e09020 16% 18%,#e07020 18% 20%,#a07020 20% 22%,#e05020 22% 24%,#a05020 24% 26%,#705020 26% 28%,#e03020 28% 30%,#a03020 30% 32%,#703020 32% 34%,#e02020 34% 36%,#a02020 36% 38%,#702020 38% 40%,#e00020 40% 42%,#a00020 42% 44%,#800020 44% 46%,#e08010 46% 48%,#e06010 48% 50%,#a06010 50% 52%,#e04010 52% 54%,#a04010 54% 56%,#805010 56% 58%,#e02010 58% 60%,#a03010 60% 62%,#703010 62% 64%,#503010 64% 66%,#e01010 66% 68%,#a01010 68% 70%,#701010 70% 72%,#501010 72% 74%,#e00010 74% 76%,#a00010 76% 78%,#700010 78% 80%,#500010 80% 82%,#e08000 82% 84%,#e06000 84% 86%,#a06000 86% 88%,#e04000 88% 90%,#a04000 90% 92%,#705000 92% 94%,#e02000 94% 96%,#a02000 96% 98%,#702000 98% 100%)"></i><i style="background:linear-gradient(90deg,#503010 0% 2%,#e02010 2% 4%,#a02010 4% 6%,#802010 6% 8%,#502010 8% 10%,#202010 10% 12%,#e00010 12% 14%,#a00010 14% 16%,#800010 16% 18%,#500010 18% 20%,#200010 20% 22%,#e09000 22% 24%,#e07000 24% 26%,#a07000 26% 28%,#e05000 28% 30%,#a05000 30% 32%,#805000 32% 34%,#e03000 34% 36%,#a03000 36% 38%,#803000 38% 40%,#504000 40% 42%,#e02000 42% 44%,#b02000 44% 46%,#802000 46% 48%,#502000 48% 50%,#302000 50% 52%,#e00000 52% 54%,#b00000 54% 56%,#900000 56% 58%,#600000 58% 60%,#300000 60% 62%,#000000 62% 64%,#f07020 64% 66%,#f0541c 66% 68%,#f03818 68% 70%,#f01c14 70% 72%,#f00010 72% 74%,#f08020 74% 76%,#f06020 76% 78%,#f03020 78% 80%,#f02020 80% 82%,#f00010 82% 84%,#f09010 84% 86%,#f07010 86% 88%,#f03010 88% 90%,#f01010 90% 92%,#f00000 92% 94%,#f09000 94% 96%,#f06000 96% 98%,#f03000 98% 100%)"></i><i style="background:linear-gradient(90deg,#f01010 0% 2%,#f00000 2% 4%,#f08000 4% 6%,#f06000 6% 8%,#f04000 8% 10%,#f02000 10% 12%,#f00000 12% 14%,#000000 14% 16%,#000000 16% 18%,#e08010 18% 20%,#e06010 20% 22%,#e04010 22% 24%,#e03010 24% 26%,#e01010 26% 28%,#e00010 28% 30%,#e08000 30% 32%,#e06000 32% 34%,#a05000 34% 36%,#006000 36% 38%,#e04000 38% 40%,#a04000 40% 42%,#e03000 42% 44%,#a03000 44% 46%,#e01000 46% 48%,#a01000 48% 50%,#e00000 50% 52%,#a00000 52% 54%,#000000 54% 56%,#e08000 56% 58%,#e06000 58% 60%,#a06000 60% 62%,#e04000 62% 64%,#a04000 64% 66%,#804000 66% 68%,#e03000 68% 70%,#a03000 70% 72%,#803000 72% 74%,#e02000 74% 76%,#a01000 76% 78%,#801000 78% 80%,#e00000 80% 82%,#a00000 82% 84%,#800000 84% 86%,#e08000 86% 88%,#e06000 88% 90%,#a06000 90% 92%,#e04000 92% 94%,#a04000 94% 96%,#704000 96% 98%,#e03000 98% 100%)"></i><i style="background:linear-gradient(90deg,#a03010 0% 2%,#803010 2% 4%,#503010 4% 6%,#e01010 6% 8%,#a01010 8% 10%,#801010 10% 12%,#501010 12% 14%,#e00010 14% 16%,#b00010 16% 18%,#800010 18% 20%,#500010 20% 22%,#e07000 22% 24%,#e06000 24% 26%,#a06000 26% 28%,#e04000 28% 30%,#a04000 30% 32%,#804000 32% 34%,#e03000 34% 36%,#a03000 36% 38%,#803000 38% 40%,#503000 40% 42%,#e02000 42% 44%,#a02000 44% 46%,#801000 46% 48%,#501000 48% 50%,#302000 50% 52%,#e00000 52% 54%,#b00000 54% 56%,#800000 56% 58%,#500000 58% 60%,#300000 60% 62%,#e09000 62% 64%,#e07000 64% 66%,#a06000 66% 68%,#006000 68% 70%,#e05000 70% 72%,#a04000 72% 74%,#805000 74% 76%,#e03000 76% 78%,#a03000 78% 80%,#803000 80% 82%,#503000 82% 84%,#e02000 84% 86%,#a01000 86% 88%,#801000 88% 90%,#502000 90% 92%,#e00000 92% 94%,#b00000 94% 96%,#800000 96% 98%,#500000 98% 100%)"></i><i style="background:linear-gradient(90deg,#500000 0% 2%,#300000 2% 4%,#000000 4% 6%,#f08000 6% 8%,#f06000 8% 10%,#f04000 10% 12%,#f02000 12% 14%,#f00000 14% 16%,#f08000 16% 18%,#f06000 18% 20%,#f04000 20% 22%,#f02000 22% 24%,#f00000 24% 26%,#f07000 26% 28%,#f05400 28% 30%,#f03800 30% 32%,#f01c00 32% 34%,#f00000 34% 36%,#f08000 36% 38%,#f06000 38% 40%,#f04000 40% 42%,#f02000 42% 44%,#f00000 44% 46%,#f08000 46% 48%,#f07000 48% 50%,#f05000 50% 52%,#f03000 52% 54%,#f00000 54% 56%,#e07000 56% 58%,#e04b00 58% 60%,#e02500 60% 62%,#e00000 62% 64%,#e07000 64% 66%,#e04b00 66% 68%,#e02500 68% 70%,#e00000 70% 72%,#e07000 72% 74%,#e04b00 74% 76%,#e02500 76% 78%,#e00000 78% 80%,#e07000 80% 82%,#e04b00 82% 84%,#e02500 84% 86%,#e00000 86% 88%,#000000 88% 90%,#a04000 90% 92%,#a02000 92% 94%,#a00000 94% 96%,#a04010 96% 98%,#a02010 98% 100%)"></i><i style="background:linear-gradient(90deg,#c00000 0% 2%,#006000 2% 4%,#c04000 4% 6%,#c02000 6% 8%,#c00000 8% 10%,#802000 10% 12%,#801000 12% 14%,#800000 14% 16%,#702800 16% 18%,#701000 18% 20%,#700000 20% 22%,#702000 22% 24%,#701000 24% 26%,#700000 26% 28%,#501000 28% 30%,#301000 30% 32%,#300000 32% 34%,#301000 34% 36%,#300000 36% 38%,#000000 38% 40%,#000000 40% 42%,#000000 42% 44%,#c0b0a0 44% 46%,#c090b0 46% 48%,#c050b0 48% 50%,#c020b0 50% 52%,#c000b0 52% 54%,#c0b070 54% 56%,#c09080 56% 58%,#909080 58% 60%,#c04090 60% 62%,#904090 62% 64%,#c02090 64% 66%,#902090 66% 68%,#c00080 68% 70%,#900090 70% 72%,#c0b040 72% 74%,#c09040 74% 76%,#909040 76% 78%,#c04040 78% 80%,#904040 80% 82%,#404040 82% 84%,#c02040 84% 86%,#902040 86% 88%,#402040 88% 90%,#c00040 90% 92%,#900040 92% 94%,#400040 94% 96%,#c0b020 96% 98%,#c09030 98% 100%)"></i><i style="background:linear-gradient(90deg,#a09030 0% 2%,#d05030 2% 4%,#a05030 4% 6%,#505030 6% 8%,#d02030 8% 10%,#a02030 10% 12%,#502020 12% 14%,#202020 14% 16%,#d00020 16% 18%,#a00020 18% 20%,#500020 20% 22%,#200020 22% 24%,#c0b000 24% 26%,#d09000 26% 28%,#909000 28% 30%,#d05000 30% 32%,#a05000 32% 34%,#505000 34% 36%,#d03000 36% 38%,#a03000 38% 40%,#502000 40% 42%,#202000 42% 44%,#d00000 44% 46%,#a00000 46% 48%,#500000 48% 50%,#200000 50% 52%,#000000 52% 54%,#b0a090 54% 56%,#b080a0 56% 58%,#b040a0 58% 60%,#a000a0 60% 62%,#b0b070 62% 64%,#b09080 64% 66%,#808070 66% 68%,#b04070 68% 70%,#804070 70% 72%,#b00080 72% 74%,#800090 74% 76%,#b0a040 76% 78%,#b08040 78% 80%,#808040 80% 82%,#b04040 82% 84%,#804040 84% 86%,#404040 86% 88%,#b00040 88% 90%,#800040 90% 92%,#400040 92% 94%,#b0a000 94% 96%,#b08000 96% 98%,#808000 98% 100%)"></i><i style="background:linear-gradient(90deg,#d04000 0% 2%,#a04000 2% 4%,#504000 4% 6%,#d00000 6% 8%,#a00000 8% 10%,#500000 10% 12%,#000000 12% 14%,#d0b090 14% 16%,#d08494 16% 18%,#d05898 18% 20%,#d02c9c 20% 22%,#d000a0 22% 24%,#d0a060 24% 26%,#d08060 26% 28%,#a09070 28% 30%,#d04070 30% 32%,#a04070 32% 34%,#d02070 34% 36%,#a02070 36% 38%,#d00080 38% 40%,#a00070 40% 42%,#d0b040 42% 44%,#d09040 44% 46%,#a08040 46% 48%,#d04040 48% 50%,#a04040 50% 52%,#404040 52% 54%,#d02040 54% 56%,#a02040 56% 58%,#402040 58% 60%,#d00040 60% 62%,#a00040 62% 64%,#400040 64% 66%,#c0a020 66% 68%,#c08020 68% 70%,#909020 70% 72%,#c04020 72% 74%,#a04020 74% 76%,#404020 76% 78%,#c02020 78% 80%,#a02020 80% 82%,#402020 82% 84%,#202020 84% 86%,#d00020 86% 88%,#a00020 88% 90%,#400020 90% 92%,#200020 92% 94%,#c0b000 94% 96%,#c08000 96% 98%,#909000 98% 100%)"></i><i style="background:linear-gradient(90deg,#d04000 0% 2%,#a04000 2% 4%,#504000 4% 6%,#d02000 6% 8%,#a02000 8% 10%,#502000 10% 12%,#202000 12% 14%,#d00000 14% 16%,#a00000 16% 18%,#500000 18% 20%,#200000 20% 22%,#000000 22% 24%,#c0a090 24% 26%,#c08090 26% 28%,#c040a0 28% 30%,#b00090 30% 32%,#c0a060 32% 34%,#c08070 34% 36%,#908070 36% 38%,#c04070 38% 40%,#904070 40% 42%,#c00070 42% 44%,#900070 44% 46%,#c0a030 46% 48%,#c08030 48% 50%,#808030 50% 52%,#c04030 52% 54%,#804030 54% 56%,#404030 56% 58%,#c00030 58% 60%,#800030 60% 62%,#400030 62% 64%,#b0a000 64% 66%,#b08000 66% 68%,#807000 68% 70%,#b04000 70% 72%,#803000 72% 74%,#404000 74% 76%,#c00000 76% 78%,#a00000 78% 80%,#400000 80% 82%,#000000 82% 84%,#605040 84% 86%,#602040 86% 88%,#500050 88% 90%,#606020 90% 92%,#602020 92% 94%,#303020 94% 96%,#600020 96% 98%,#300020 98% 100%)"></i><i style="background:linear-gradient(90deg,#505000 0% 2%,#703000 2% 4%,#403000 4% 6%,#700000 6% 8%,#400000 8% 10%,#000000 10% 12%,#404040 12% 14%,#402040 14% 16%,#400040 16% 18%,#404020 18% 20%,#402020 20% 22%,#202020 22% 24%,#400020 24% 26%,#200020 26% 28%,#404000 28% 30%,#402000 30% 32%,#202000 32% 34%,#400000 34% 36%,#200000 36% 38%,#000000 38% 40%,#202020 40% 42%,#200020 42% 44%,#202000 44% 46%,#200000 46% 48%,#e09060 48% 50%,#e07060 50% 52%,#d04060 52% 54%,#d02060 54% 56%,#d00060 56% 58%,#d09040 58% 60%,#d07040 60% 62%,#a07030 62% 64%,#d04040 64% 66%,#a04040 66% 68%,#d02040 68% 70%,#a02040 70% 72%,#d00040 72% 74%,#a00040 74% 76%,#d09020 76% 78%,#d07020 78% 80%,#a07020 80% 82%,#d04020 82% 84%,#a04020 84% 86%,#503020 86% 88%,#d02020 88% 90%,#a02020 90% 92%,#502020 92% 94%,#d00020 94% 96%,#a00020 96% 98%,#500020 98% 100%)"></i><i style="background:linear-gradient(90deg,#d08020 0% 2%,#d07020 2% 4%,#a07020 4% 6%,#d04020 6% 8%,#a04020 8% 10%,#504020 10% 12%,#d02020 12% 14%,#a02020 14% 16%,#501010 16% 18%,#201010 18% 20%,#d00010 20% 22%,#a00010 22% 24%,#500010 24% 26%,#200010 26% 28%,#d09000 28% 30%,#d07000 30% 32%,#a07000 32% 34%,#d04000 34% 36%,#a04000 36% 38%,#503000 38% 40%,#d02000 40% 42%,#a02000 42% 44%,#502000 44% 46%,#202000 46% 48%,#d00000 48% 50%,#c00000 50% 52%,#500000 52% 54%,#300000 54% 56%,#000000 56% 58%,#c08040 58% 60%,#c06040 60% 62%,#c03040 62% 64%,#c00040 64% 66%,#c08030 66% 68%,#c06030 68% 70%,#906030 70% 72%,#c03030 72% 74%,#903030 74% 76%,#c00030 76% 78%,#800030 78% 80%,#c08020 80% 82%,#c07020 82% 84%,#907020 84% 86%,#c03020 86% 88%,#903020 88% 90%,#403010 90% 92%,#c00010 92% 94%,#900010 94% 96%,#400010 96% 98%,#c08000 98% 100%)"></i><i style="background:linear-gradient(90deg,#d07000 0% 2%,#907000 2% 4%,#d04000 4% 6%,#a03000 6% 8%,#503000 8% 10%,#c00000 10% 12%,#a00000 12% 14%,#500000 14% 16%,#000000 16% 18%,#604020 18% 20%,#602020 20% 22%,#600020 22% 24%,#605020 24% 26%,#602010 26% 28%,#202010 28% 30%,#600010 30% 32%,#200010 32% 34%,#605000 34% 36%,#603000 36% 38%,#403000 38% 40%,#600000 40% 42%,#300000 42% 44%,#403010 44% 46%,#402010 46% 48%,#400010 48% 50%,#403000 50% 52%,#402010 52% 54%,#202010 54% 56%,#400010 56% 58%,#200010 58% 60%,#403000 60% 62%,#402000 62% 64%,#202000 64% 66%,#400000 66% 68%,#200000 68% 70%,#e09030 70% 72%,#e07030 72% 74%,#e04030 74% 76%,#e02030 76% 78%,#e00030 78% 80%,#e08020 80% 82%,#e07020 82% 84%,#a07020 84% 86%,#e03020 86% 88%,#a03020 88% 90%,#e02020 90% 92%,#a02020 92% 94%,#e00020 94% 96%,#a00020 96% 98%,#e08000 98% 100%)"></i><i style="background:linear-gradient(90deg,#d06010 0% 2%,#a06010 2% 4%,#d04010 4% 6%,#a03010 6% 8%,#503010 8% 10%,#d01010 10% 12%,#a01010 12% 14%,#501010 14% 16%,#d00010 16% 18%,#a00010 18% 20%,#500010 20% 22%,#d08000 22% 24%,#d07000 24% 26%,#a07000 26% 28%,#d04000 28% 30%,#a04000 30% 32%,#503000 32% 34%,#d02000 34% 36%,#a02000 36% 38%,#502010 38% 40%,#202010 40% 42%,#d00000 42% 44%,#a00000 44% 46%,#500000 46% 48%,#300000 48% 50%,#d08000 50% 52%,#d07000 52% 54%,#a07000 54% 56%,#d04000 56% 58%,#a03000 58% 60%,#403000 60% 62%,#d02000 62% 64%,#a02000 64% 66%,#401000 66% 68%,#202000 68% 70%,#e00000 70% 72%,#a00000 72% 74%,#500000 74% 76%,#300000 76% 78%,#000000 78% 80%,#d07000 80% 82%,#d06000 82% 84%,#d03000 84% 86%,#e02000 86% 88%,#e00000 88% 90%,#d07000 90% 92%,#d06000 92% 94%,#a06000 94% 96%,#d03000 96% 98%,#a03000 98% 100%)"></i><i style="background:linear-gradient(90deg,#d02000 0% 2%,#a02000 2% 4%,#d00000 4% 6%,#a00000 6% 8%,#d07000 8% 10%,#d06000 10% 12%,#a06000 12% 14%,#d03000 14% 16%,#a03000 16% 18%,#503000 18% 20%,#d02000 20% 22%,#a02000 22% 24%,#502000 24% 26%,#d00000 26% 28%,#a00000 28% 30%,#500000 30% 32%,#d07000 32% 34%,#d06000 34% 36%,#a06000 36% 38%,#d03000 38% 40%,#a03000 40% 42%,#503000 42% 44%,#d02000 44% 46%,#a02000 46% 48%,#502000 48% 50%,#201000 50% 52%,#e00000 52% 54%,#b00000 54% 56%,#500000 56% 58%,#300000 58% 60%,#d07000 60% 62%,#d06000 62% 64%,#a06000 64% 66%,#d03000 66% 68%,#a03000 68% 70%,#402000 70% 72%,#d02000 72% 74%,#a02000 74% 76%,#401000 76% 78%,#201000 78% 80%,#d00000 80% 82%,#a00000 82% 84%,#400000 84% 86%,#200000 86% 88%,#c06000 88% 90%,#c05000 90% 92%,#c03000 92% 94%,#c00000 94% 96%,#b06000 96% 98%,#c04000 98% 100%)"></i><i style="background:linear-gradient(90deg,#904000 0% 2%,#c03000 2% 4%,#903000 4% 6%,#c00000 6% 8%,#900000 8% 10%,#c06000 10% 12%,#c05000 12% 14%,#905000 14% 16%,#c02000 16% 18%,#902000 18% 20%,#502000 20% 22%,#c00000 22% 24%,#900000 24% 26%,#500000 26% 28%,#c07000 28% 30%,#c05000 30% 32%,#905000 32% 34%,#c02000 34% 36%,#902000 36% 38%,#502000 38% 40%,#c00000 40% 42%,#900000 42% 44%,#500000 44% 46%,#703000 46% 48%,#702000 48% 50%,#600000 50% 52%,#703000 52% 54%,#701000 54% 56%,#302000 56% 58%,#600000 58% 60%,#300000 60% 62%,#703000 62% 64%,#601000 64% 66%,#302000 66% 68%,#600000 68% 70%,#402000 70% 72%,#401000 72% 74%,#500000 74% 76%,#402000 76% 78%,#401000 78% 80%,#201000 80% 82%,#400000 82% 84%,#200000 84% 86%,#402000 86% 88%,#401000 88% 90%,#201000 90% 92%,#400000 92% 94%,#201000 94% 96%,#200000 96% 98%,#201000 98% 100%)"></i></div>
<div class="t" style="left:904px;top:219px;font-family:'Liberation Mono',monospace;font-weight:bold;font-size:4.15px;line-height:6px;color:#222;letter-spacing:0px">SCLB-3500-Chart Page 1 of 1</div>
<div class="t" style="left:788px;top:694px;font-family:'Liberation Mono',monospace;font-weight:bold;font-size:4.25px;line-height:6px;color:#222">(C) ColorLogic GmbH</div>
<div class="btn dis" style="left:698px;top:710px">Vorherige</div>
<div class="btn dis" style="left:1090px;top:710px">Nächste</div>
<div class="t" style="left:928px;top:710px">1/1</div>

<!-- bottom separator & buttons -->
<div class="a" style="left:194px;top:755px;width:997px;height:1px;background:#a0a0a0"></div>
<div class="btn" style="left:971px;top:767px;border:2px solid #0078d7;line-height:20px">Start</div>
<div class="btn" style="left:1067px;top:767px">Schließen</div>
<div class="help" style="left:1166px;top:770px"></div>

</body></html>
